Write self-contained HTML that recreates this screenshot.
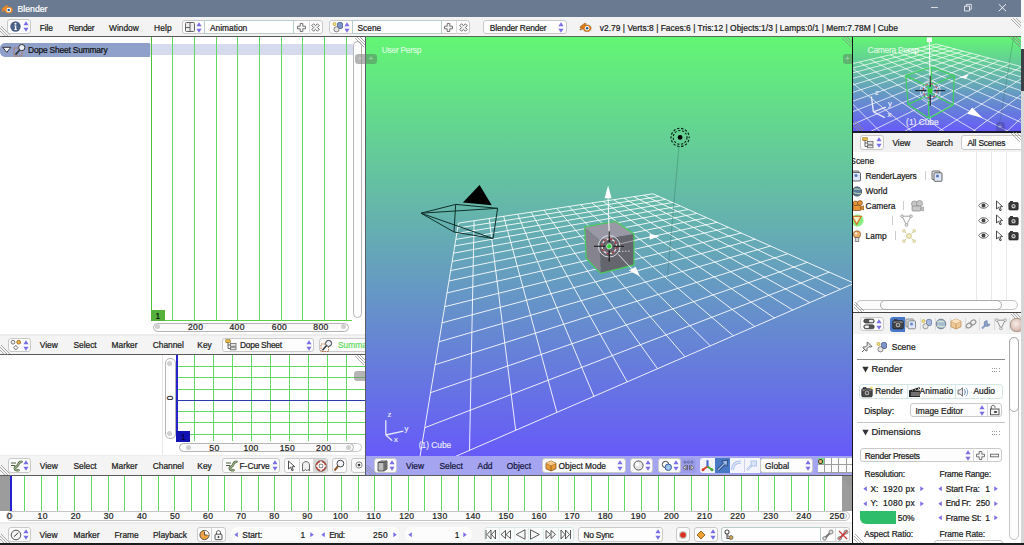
<!DOCTYPE html>
<html><head><meta charset="utf-8"><title>Blender</title>
<style>
html,body{margin:0;padding:0;background:#fff;}
#r{position:relative;width:1024px;height:545px;overflow:hidden;font-family:"Liberation Sans",sans-serif;}
#r div,#r svg{position:absolute;}
#r svg{overflow:hidden;}
.t{white-space:nowrap;-webkit-text-stroke:0.22px currentColor;}
.b{background:#fdfdfd;border:1px solid #c9c9c9;border-radius:3px;box-sizing:border-box;}
</style></head><body><div id="r">
<div style="left:0px;top:0px;width:1021px;height:17px;background:#697a91;"></div>
<div style="left:0px;top:17px;width:1024px;height:19px;background:#f3f3f3;"></div>
<div style="left:0px;top:36px;width:1024px;height:1.4px;background:#585858;"></div>
<div style="left:0px;top:37px;width:365px;height:298px;background:#fff;"></div>
<div style="left:0px;top:334.5px;width:365px;height:19.5px;background:#f4f4f4;"></div>
<div style="left:0px;top:334.3px;width:365px;height:1.3px;background:#ececec;"></div>
<div style="left:0px;top:354px;width:365px;height:1px;background:#5a5a5a;"></div>
<div style="left:0px;top:355px;width:365px;height:100px;background:#fff;"></div>
<div style="left:0px;top:455px;width:365px;height:20px;background:#f4f4f4;"></div>
<div style="left:0px;top:454.6px;width:365px;height:1.3px;background:#ececec;"></div>
<div style="left:0px;top:475px;width:853px;height:1px;background:#5a5a5a;"></div>
<div style="left:0px;top:476px;width:853px;height:47px;background:#fff;"></div>
<div style="left:0px;top:522.8px;width:853px;height:20.2px;background:#f4f4f4;"></div>
<div style="left:0px;top:522.3px;width:853px;height:1.3px;background:#ececec;"></div>
<div style="left:0px;top:543px;width:1024px;height:2px;background:#4a4a4a;"></div>
<div style="left:365px;top:37px;width:1px;height:438px;background:#5c5c66;"></div>
<div style="left:366px;top:37px;width:486px;height:420px;background:linear-gradient(#63f674,#675af9)"></div>
<div style="left:366px;top:456px;width:486px;height:19px;background:#a4a4f0;"></div>
<div style="left:851.5px;top:37px;width:1.3px;height:508px;background:#151515;"></div>
<div style="left:853px;top:37px;width:168px;height:94.5px;background:linear-gradient(#63f674,#675af9)"></div>
<div style="left:853px;top:131.3px;width:168px;height:1.4px;background:#1a1a30;"></div>
<div style="left:853px;top:132.7px;width:168px;height:19px;background:#f2f2f2;"></div>
<div style="left:853px;top:151.5px;width:168px;height:160.5px;background:#fff;"></div>
<div style="left:853px;top:312px;width:168px;height:1px;background:#444;"></div>
<div style="left:853px;top:313px;width:168px;height:21px;background:#f2f2f2;"></div>
<div style="left:853px;top:334px;width:168px;height:209px;background:#fff;"></div>
<svg style="left:366px;top:37px;" width="486" height="419" viewBox="0 0 486 419"><path d="M92.5 186.1L51.3 436.0M92.5 186.1L287.0 156.8M108.1 183.7L103.5 413.4M91.7 191.0L293.1 159.5M123.2 181.5L149.7 393.3M90.8 196.4L299.6 162.4M137.7 179.3L190.9 375.4M89.8 202.4L306.6 165.5M151.7 177.2L227.9 359.4M88.7 208.9L314.1 168.9M165.1 175.2L261.2 344.9M87.5 216.2L322.3 172.5M178.2 173.2L291.5 331.7M86.2 224.4L331.1 176.4M190.7 171.3L319.0 319.8M84.7 233.6L340.7 180.7M202.9 169.5L344.3 308.8M83.0 244.0L351.1 185.3M214.6 167.7L367.4 298.8M81.0 255.9L362.6 190.4M226.0 166.0L388.7 289.5M78.7 269.7L375.2 196.0M236.9 164.3L408.5 281.0M76.1 285.8L389.1 202.2M247.6 162.7L426.8 273.0M72.9 304.8L404.5 209.0M257.9 161.2L443.8 265.6M69.2 327.7L421.8 216.7M267.9 159.7L459.6 258.8M64.5 355.7L441.2 225.4M277.6 158.2L474.4 252.3M58.8 390.7L463.2 235.1M287.0 156.8L488.3 246.3M51.3 436.0L488.3 246.3" stroke="#fff" stroke-width="0.95" fill="none" opacity="0.92"/></svg>
<svg style="left:1.2px;top:2.8px;" width="14" height="13" viewBox="0 0 14 13"><g transform="scale(0.9)"><path d="M1 6.2 L6.5 2.2 L8 3.2 L5.8 5 L8.5 4.2 C11.5 4.2 13 6 13 7.8 C13 10 11 11.5 8.5 11.5 C6 11.5 4.2 10 4.3 8 L1.5 10 L0.8 9 L3.5 7 L1 7.2 Z" fill="#f08a1e"/><circle cx="8.6" cy="7.8" r="2.6" fill="#fff"/><circle cx="8.6" cy="7.8" r="1.5" fill="#2b5d94"/></g></svg>
<div class="t" style="left:17.5px;top:2.60px;line-height:12px;font-size:8.7px;color:#fff;">Blender</div>
<div style="left:930.7px;top:7px;width:7.3px;height:1px;background:rgba(255,255,255,0.75);"></div>
<svg style="left:963px;top:2.8px;" width="10" height="10" viewBox="0 0 10 10"><path d="M1.5 3.2 H6.5 V8 H1.5 Z M3.3 3.2 V1.4 H8.3 V6.2 H6.5" stroke="#fff" stroke-width="0.9" fill="none" opacity="0.88"/></svg>
<svg style="left:997px;top:2.8px;" width="10" height="10" viewBox="0 0 10 10"><path d="M1.8 1.2 L9 8.2 M9 1.2 L1.8 8.2" stroke="#fff" stroke-width="1" fill="none" opacity="0.9"/></svg>
<svg style="left:0px;top:26px;" width="10" height="10" viewBox="0 0 10 10"><path d="M0 2 L8 10 M0 5 L5 10 M0 -1 L11 10" stroke="#8a8a8a" stroke-width="0.7" fill="none"/></svg>
<div class="b" style="left:7.2px;top:19.1px;width:23.6px;height:14.7px;"></div>
<svg style="left:10px;top:21px;" width="11" height="11" viewBox="0 0 11 11"><circle cx="5.5" cy="5.5" r="5.2" fill="#4b6087"/><circle cx="5.5" cy="2.8" r="1" fill="#fff"/><path d="M4.2 4.6 H6.3 V8.3 H7 V9 H4.2 V8.3 H4.9 V5.3 H4.2 Z" fill="#fff"/></svg>
<svg style="left:23px;top:21.1px" width="6" height="11" viewBox="0 0 6 11"><path d="M3 0.3 L5.6 4.3 L0.4 4.3 Z M3 10.7 L5.6 6.7 L0.4 6.7 Z" fill="#7a6fe8"/></svg>
<div class="t" style="left:39.7px;top:22.10px;line-height:12px;font-size:8.4px;color:#1a1a1a;letter-spacing:-0.075px;--k:1;">File</div>
<div class="t" style="left:68.4px;top:22.10px;line-height:12px;font-size:8.4px;color:#1a1a1a;letter-spacing:-0.261px;--k:1;">Render</div>
<div class="t" style="left:109px;top:22.10px;line-height:12px;font-size:8.4px;color:#1a1a1a;letter-spacing:-0.016px;--k:1;">Window</div>
<div class="t" style="left:154px;top:22.10px;line-height:12px;font-size:8.4px;color:#1a1a1a;letter-spacing:0.116px;--k:1;">Help</div>
<div class="b" style="left:181.5px;top:19.5px;width:141px;height:14.5px;"></div>
<div style="left:204.0px;top:19.5px;width:88px;height:12.5px;border:1px solid #b9cccc;background:#fefefe"></div>
<div class="t" style="left:210.0px;top:22.10px;line-height:12px;font-size:8.4px;color:#1a1a1a;">Animation</div>
<svg style="left:295.5px;top:21.5px;" width="11" height="11" viewBox="0 0 11 11"><path d="M4.2 1.5 H6.8 V4.2 H9.5 V6.8 H6.8 V9.5 H4.2 V6.8 H1.5 V4.2 H4.2 Z" stroke="#666" stroke-width="0.9" fill="#f4f4f4"/></svg>
<div style="left:308.5px;top:20.5px;width:1px;height:13px;background:#ddd;"></div>
<svg style="left:310.0px;top:21.5px;" width="11" height="11" viewBox="0 0 11 11"><path d="M4.2 1.5 H6.8 V4.2 H9.5 V6.8 H6.8 V9.5 H4.2 V6.8 H1.5 V4.2 H4.2 Z" stroke="#666" stroke-width="0.9" fill="#f4f4f4" transform="rotate(45 5.5 5.5)"/></svg>
<svg style="left:196.0px;top:21.5px" width="6" height="11" viewBox="0 0 6 11"><path d="M3 0.3 L5.6 4.3 L0.4 4.3 Z M3 10.7 L5.6 6.7 L0.4 6.7 Z" fill="#7a6fe8"/></svg>
<svg style="left:185px;top:22px" width="10" height="10" viewBox="0 0 10 10"><rect x="0.5" y="0.5" width="9" height="9" rx="1" fill="#eee" stroke="#555" stroke-width="0.9"/><path d="M5 0.5 V9.5 M0.5 5.5 H5" stroke="#555" stroke-width="0.9"/></svg>
<div class="b" style="left:329px;top:19.5px;width:141px;height:14.5px;"></div>
<div style="left:351.5px;top:19.5px;width:88px;height:12.5px;border:1px solid #b9cccc;background:#fefefe"></div>
<div class="t" style="left:357.5px;top:22.10px;line-height:12px;font-size:8.4px;color:#1a1a1a;">Scene</div>
<svg style="left:443px;top:21.5px;" width="11" height="11" viewBox="0 0 11 11"><path d="M4.2 1.5 H6.8 V4.2 H9.5 V6.8 H6.8 V9.5 H4.2 V6.8 H1.5 V4.2 H4.2 Z" stroke="#666" stroke-width="0.9" fill="#f4f4f4"/></svg>
<div style="left:456px;top:20.5px;width:1px;height:13px;background:#ddd;"></div>
<svg style="left:457.5px;top:21.5px;" width="11" height="11" viewBox="0 0 11 11"><path d="M4.2 1.5 H6.8 V4.2 H9.5 V6.8 H6.8 V9.5 H4.2 V6.8 H1.5 V4.2 H4.2 Z" stroke="#666" stroke-width="0.9" fill="#f4f4f4" transform="rotate(45 5.5 5.5)"/></svg>
<svg style="left:343.5px;top:21.5px" width="6" height="11" viewBox="0 0 6 11"><path d="M3 0.3 L5.6 4.3 L0.4 4.3 Z M3 10.7 L5.6 6.7 L0.4 6.7 Z" fill="#7a6fe8"/></svg>
<svg style="left:332px;top:21px" width="12" height="12" viewBox="0 0 12 12"><circle cx="2.5" cy="3" r="1.6" fill="#f4e27a" stroke="#a89020" stroke-width="0.6"/><rect x="5.5" y="1.5" width="5" height="6" rx="1.5" fill="#7d95c9" stroke="#3c4f80" stroke-width="0.7"/><circle cx="4.5" cy="8.3" r="2.6" fill="#e8e8e8" stroke="#555" stroke-width="0.7"/></svg>
<div class="b" style="left:483px;top:19.5px;width:84px;height:14.5px;"></div>
<div class="t" style="left:489.8px;top:22.10px;line-height:12px;font-size:8.4px;color:#1a1a1a;letter-spacing:-0.148px;--k:1;">Blender Render</div>
<svg style="left:558px;top:21.5px" width="6" height="11" viewBox="0 0 6 11"><path d="M3 0.3 L5.6 4.3 L0.4 4.3 Z M3 10.7 L5.6 6.7 L0.4 6.7 Z" fill="#7a6fe8"/></svg>
<svg style="left:579px;top:21px;" width="13" height="12" viewBox="0 0 13 12"><path d="M1 5.7 L6 2 L7.4 3 L5.4 4.6 L8 3.9 C10.8 3.9 12.2 5.5 12.2 7.2 C12.2 9.2 10.3 10.6 8 10.6 C5.7 10.6 4 9.2 4.1 7.4 L1.5 9.2 L0.8 8.3 L3.3 6.4 L1 6.6 Z" fill="#e8801a" stroke="#6b3b08" stroke-width="0.4"/><circle cx="8.1" cy="7.2" r="2.3" fill="#fff"/><circle cx="8.1" cy="7.2" r="1.3" fill="#2b5d94"/></svg>
<div class="t" style="left:599.8px;top:22.10px;line-height:12px;font-size:8.4px;color:#1a1a1a;letter-spacing:0.039px;--k:1;">v2.79 | Verts:8 | Faces:6 | Tris:12 | Objects:1/3 | Lamps:0/1 | Mem:7.78M | Cube</div>
<svg style="left:1011px;top:37px;" width="10" height="10" viewBox="0 0 10 10"><path d="M2 0 L10 8 M5 0 L10 5 M-1 0 L10 11" stroke="#8a8a8a" stroke-width="0.7" fill="none"/></svg>
<div style="left:0;top:43px;width:150px;height:14px;background:#8fa1ca;border-radius:5px 0 0 5px"></div>
<div style="left:150px;top:44px;width:203px;height:10.5px;background:#d5dbec;"></div>
<svg style="left:2px;top:46px;" width="10" height="8" viewBox="0 0 10 8"><path d="M0.7 1.3 H8.9 L4.8 6.4 Z" fill="#f0f3fa" stroke="#222" stroke-width="0.9"/></svg>
<svg style="left:13px;top:43px;" width="14" height="14" viewBox="0 0 14 14"><rect x="1" y="5" width="8" height="8" fill="none" stroke="#b46a3a" stroke-width="1" stroke-dasharray="1.5 1"/><circle cx="8.8" cy="4.6" r="3.1" fill="#e9eef8" stroke="#333" stroke-width="1"/><path d="M6.6 7 L2.5 11.6" stroke="#333" stroke-width="1.6"/></svg>
<div class="t" style="left:28px;top:43.80px;line-height:12px;font-size:8.4px;color:#111;letter-spacing:-0.161px;--k:1;">Dope Sheet Summary</div>
<div style="left:150.7px;top:37px;width:1px;height:283.5px;background:#4fc23c;"></div>
<div style="left:172.4px;top:37px;width:1px;height:283.5px;background:#62d962;"></div>
<div style="left:194.0px;top:37px;width:1px;height:283.5px;background:#62d962;"></div>
<div style="left:215.7px;top:37px;width:1px;height:283.5px;background:#62d962;"></div>
<div style="left:237.4px;top:37px;width:1px;height:283.5px;background:#62d962;"></div>
<div style="left:259.1px;top:37px;width:1px;height:283.5px;background:#62d962;"></div>
<div style="left:280.7px;top:37px;width:1px;height:283.5px;background:#62d962;"></div>
<div style="left:302.4px;top:37px;width:1px;height:283.5px;background:#62d962;"></div>
<div style="left:324.1px;top:37px;width:1px;height:283.5px;background:#62d962;"></div>
<div style="left:345.7px;top:37px;width:1px;height:283.5px;background:#62d962;"></div>
<div style="left:151px;top:320px;width:201px;height:1px;background:#5fce4a;"></div>
<div style="left:151px;top:310px;width:13.5px;height:10.5px;background:#55b13c;"></div>
<div class="t" style="left:155.5px;top:309.70px;line-height:12px;font-size:8.4px;color:#111;">1</div>
<div style="left:152.5px;top:322.5px;width:194.5px;height:7px;border:1px solid #b5b5b5;border-radius:5px;background:#fafafa"></div>
<div style="left:154.5px;top:324.3px;width:5px;height:5px;border-radius:3px;background:#cfcfcf"></div>
<div style="left:340.5px;top:324.3px;width:5px;height:5px;border-radius:3px;background:#cfcfcf"></div>
<div class="t" style="left:188.0px;top:321.20px;line-height:12px;font-size:8.6px;color:#222;letter-spacing:0.3px;">200</div>
<div class="t" style="left:229.5px;top:321.20px;line-height:12px;font-size:8.6px;color:#222;letter-spacing:0.3px;">400</div>
<div class="t" style="left:271.8px;top:321.20px;line-height:12px;font-size:8.6px;color:#222;letter-spacing:0.3px;">600</div>
<div class="t" style="left:313.3px;top:321.20px;line-height:12px;font-size:8.6px;color:#222;letter-spacing:0.3px;">800</div>
<div style="left:353px;top:41px;width:7px;height:275px;border:1px solid #b5b5b5;border-radius:5px;background:#fdfdfd"></div>
<div style="left:355px;top:54px;width:10.5px;height:10px;background:rgba(120,120,120,0.55);border-radius:3px 0 0 3px"></div>
<div style="left:366px;top:54px;width:10.5px;height:10px;background:rgba(90,140,100,0.6);border-radius:0 3px 3px 0"></div>
<div class="t" style="left:368.5px;top:52.80px;line-height:12px;font-size:8px;color:rgba(255,255,255,0.35);">+</div>
<div class="t" style="left:357.5px;top:52.80px;line-height:12px;font-size:8px;color:rgba(255,255,255,0.25);">+</div>
<svg style="left:355px;top:37px;" width="10" height="10" viewBox="0 0 10 10"><path d="M2 0 L10 8 M5 0 L10 5 M-1 0 L10 11" stroke="#8a8a8a" stroke-width="0.7" fill="none"/></svg>
<svg style="left:0px;top:345px;" width="10" height="10" viewBox="0 0 10 10"><path d="M0 2 L8 10 M0 5 L5 10 M0 -1 L11 10" stroke="#8a8a8a" stroke-width="0.7" fill="none"/></svg>
<div class="b" style="left:7.5px;top:337.5px;width:23px;height:14.5px;"></div>
<svg style="left:10px;top:339px" width="12" height="12" viewBox="0 0 12 12"><circle cx="3" cy="3.2" r="1.9" fill="#f3f3f3" stroke="#555" stroke-width="0.8"/><circle cx="8.7" cy="3.2" r="1.9" fill="#f1b54a" stroke="#8a5a10" stroke-width="0.8"/><path d="M5.8 6.4 L8 8.7 L5.8 11 L3.6 8.7 Z" fill="#f3f3f3" stroke="#555" stroke-width="0.8"/></svg>
<svg style="left:22.5px;top:339.5px" width="6" height="11" viewBox="0 0 6 11"><path d="M3 0.3 L5.6 4.3 L0.4 4.3 Z M3 10.7 L5.6 6.7 L0.4 6.7 Z" fill="#7a6fe8"/></svg>
<div class="t" style="left:39.8px;top:339.00px;line-height:12px;font-size:8.4px;color:#1a1a1a;">View</div>
<div class="t" style="left:73.4px;top:339.00px;line-height:12px;font-size:8.4px;color:#1a1a1a;">Select</div>
<div class="t" style="left:111.5px;top:339.00px;line-height:12px;font-size:8.4px;color:#1a1a1a;">Marker</div>
<div class="t" style="left:152.7px;top:339.00px;line-height:12px;font-size:8.4px;color:#1a1a1a;">Channel</div>
<div class="t" style="left:197.3px;top:339.00px;line-height:12px;font-size:8.4px;color:#1a1a1a;">Key</div>
<div class="b" style="left:221.5px;top:337.5px;width:92px;height:14.5px;"></div>
<svg style="left:225px;top:339px;" width="12" height="12" viewBox="0 0 12 12"><rect x="0.8" y="0.8" width="4.4" height="2.6" fill="#f1c64a" stroke="#8a6a10" stroke-width="0.7"/><path d="M3 3.4 V9.5 H5.5 M3 6 H5.5" stroke="#555" stroke-width="0.9" fill="none"/><rect x="5.5" y="4.6" width="5.5" height="2.6" fill="#e8e8e8" stroke="#555" stroke-width="0.7"/><rect x="5.5" y="8.2" width="5.5" height="2.6" fill="#e8e8e8" stroke="#555" stroke-width="0.7"/></svg>
<div class="t" style="left:240px;top:339.00px;line-height:12px;font-size:8.4px;color:#1a1a1a;letter-spacing:-0.245px;--k:1;">Dope Sheet</div>
<svg style="left:306px;top:339.5px" width="6" height="11" viewBox="0 0 6 11"><path d="M3 0.3 L5.6 4.3 L0.4 4.3 Z M3 10.7 L5.6 6.7 L0.4 6.7 Z" fill="#7a6fe8"/></svg>
<div style="left:0px;top:335px;width:365px;height:20px;overflow:hidden"><div style="left:0px;top:-335px;width:1024px;height:545px">
<div class="b" style="left:318.5px;top:337.5px;width:60px;height:14.5px;"></div>
<svg style="left:320px;top:338.5px;" width="13" height="13" viewBox="0 0 13 13"><rect x="1" y="5" width="7.5" height="7.5" fill="none" stroke="#b46a3a" stroke-width="1" stroke-dasharray="1.5 1"/><circle cx="8.6" cy="4.4" r="3" fill="#eef2fa" stroke="#333" stroke-width="1"/><path d="M6.4 6.8 L2.5 11.2" stroke="#333" stroke-width="1.5"/></svg>
<div class="t" style="left:338px;top:339.00px;line-height:12px;font-size:8.4px;color:#5fdc5f;">Summary</div>
</div></div>
<div style="left:161.5px;top:355px;width:1px;height:100px;background:#e6e6e6;"></div>
<div style="left:194.4px;top:355px;width:1px;height:86px;background:#62d962;"></div>
<div style="left:213.4px;top:355px;width:1px;height:86px;background:#62d962;"></div>
<div style="left:232.4px;top:355px;width:1px;height:86px;background:#62d962;"></div>
<div style="left:251.4px;top:355px;width:1px;height:86px;background:#62d962;"></div>
<div style="left:270.4px;top:355px;width:1px;height:86px;background:#62d962;"></div>
<div style="left:289.4px;top:355px;width:1px;height:86px;background:#62d962;"></div>
<div style="left:308.4px;top:355px;width:1px;height:86px;background:#62d962;"></div>
<div style="left:327.4px;top:355px;width:1px;height:86px;background:#62d962;"></div>
<div style="left:346.4px;top:355px;width:1px;height:86px;background:#62d962;"></div>
<div style="left:177px;top:366.2px;width:188px;height:1px;background:#62d962;"></div>
<div style="left:177px;top:377.4px;width:188px;height:1px;background:#62d962;"></div>
<div style="left:177px;top:388.9px;width:188px;height:1px;background:#62d962;"></div>
<div style="left:177px;top:411.0px;width:188px;height:1px;background:#62d962;"></div>
<div style="left:177px;top:422.3px;width:188px;height:1px;background:#62d962;"></div>
<div style="left:177px;top:434.2px;width:188px;height:1px;background:#62d962;"></div>
<div style="left:175.5px;top:355px;width:2px;height:87px;background:#2424c8;"></div>
<div style="left:177px;top:400px;width:188px;height:1.3px;background:#2a3aae;"></div>
<div style="left:176px;top:431px;width:14px;height:11px;background:#1212b4;"></div>
<div class="t" style="left:181px;top:430.50px;line-height:12px;font-size:8.4px;color:#05053a;">1</div>
<div style="left:165px;top:358px;width:8.5px;height:79px;border:1px solid #b5b5b5;border-radius:5px;background:#fdfdfd"></div>
<div style="left:167.2px;top:360.5px;width:5px;height:5px;border-radius:3px;background:#cfcfcf"></div>
<div style="left:167.2px;top:430.5px;width:5px;height:5px;border-radius:3px;background:#cfcfcf"></div>
<div class="t" style="left:163.8px;top:392px;width:12px;height:12px;line-height:12px;font-size:8.4px;color:#222;text-align:center;transform:rotate(-90deg)">0</div>
<div style="left:179px;top:442.8px;width:181px;height:7.6px;border:1px solid #c8c8c8;border-radius:5px;background:#fdfdfd"></div>
<div style="left:179px;top:442.8px;width:173px;height:7.6px;border:1px solid #b5b5b5;border-radius:5px;background:#fafafa"></div>
<div style="left:185.5px;top:445px;width:5px;height:5px;border-radius:3px;background:#cfcfcf"></div>
<div style="left:345.5px;top:445px;width:5px;height:5px;border-radius:3px;background:#cfcfcf"></div>
<div class="t" style="left:199.4px;top:441.7px;width:30px;text-align:center;line-height:12px;font-size:8.6px;letter-spacing:0.3px;color:#222">50</div>
<div class="t" style="left:236px;top:441.7px;width:30px;text-align:center;line-height:12px;font-size:8.6px;letter-spacing:0.3px;color:#222">100</div>
<div class="t" style="left:272.4px;top:441.7px;width:30px;text-align:center;line-height:12px;font-size:8.6px;letter-spacing:0.3px;color:#222">150</div>
<div class="t" style="left:308.7px;top:441.7px;width:30px;text-align:center;line-height:12px;font-size:8.6px;letter-spacing:0.3px;color:#222">200</div>
<div style="left:354px;top:371.2px;width:11px;height:10px;background:rgba(120,120,120,0.55);border-radius:3px 0 0 3px"></div>
<svg style="left:355px;top:355px;" width="10" height="10" viewBox="0 0 10 10"><path d="M2 0 L10 8 M5 0 L10 5 M-1 0 L10 11" stroke="#8a8a8a" stroke-width="0.7" fill="none"/></svg>
<svg style="left:0px;top:465px;" width="10" height="10" viewBox="0 0 10 10"><path d="M0 2 L8 10 M0 5 L5 10 M0 -1 L11 10" stroke="#8a8a8a" stroke-width="0.7" fill="none"/></svg>
<div class="b" style="left:7.5px;top:458px;width:23px;height:14.5px;"></div>
<svg style="left:9.5px;top:459.5px" width="13" height="12" viewBox="0 0 13 12"><path d="M11.5 1.8 C7.5 1.8 9 6 6.5 6.5 C4 7 4 10.3 8.5 10.3" stroke="#5f7350" stroke-width="2.6" fill="none" stroke-linecap="round"/><path d="M11.5 1.8 C7.5 1.8 9 6 6.5 6.5 C4 7 4 10.3 8.5 10.3" stroke="#b8c8a0" stroke-width="0.9" fill="none" stroke-linecap="round"/><path d="M1 3 H6 M1 5.5 H5" stroke="#4a5a3a" stroke-width="1"/></svg>
<svg style="left:22.5px;top:460.0px" width="6" height="11" viewBox="0 0 6 11"><path d="M3 0.3 L5.6 4.3 L0.4 4.3 Z M3 10.7 L5.6 6.7 L0.4 6.7 Z" fill="#7a6fe8"/></svg>
<div class="t" style="left:39.8px;top:460.10px;line-height:12px;font-size:8.4px;color:#1a1a1a;">View</div>
<div class="t" style="left:73.4px;top:460.10px;line-height:12px;font-size:8.4px;color:#1a1a1a;">Select</div>
<div class="t" style="left:111.5px;top:460.10px;line-height:12px;font-size:8.4px;color:#1a1a1a;">Marker</div>
<div class="t" style="left:152.7px;top:460.10px;line-height:12px;font-size:8.4px;color:#1a1a1a;">Channel</div>
<div class="t" style="left:197.3px;top:460.10px;line-height:12px;font-size:8.4px;color:#1a1a1a;">Key</div>
<div class="b" style="left:221.5px;top:458px;width:58px;height:14.5px;"></div>
<svg style="left:224.5px;top:459.5px;" width="13" height="12" viewBox="0 0 13 12"><path d="M11.5 1.8 C7.5 1.8 9 6 6.5 6.5 C4 7 4 10.3 8.5 10.3" stroke="#5f7350" stroke-width="2.6" fill="none" stroke-linecap="round"/><path d="M11.5 1.8 C7.5 1.8 9 6 6.5 6.5 C4 7 4 10.3 8.5 10.3" stroke="#b8c8a0" stroke-width="0.9" fill="none" stroke-linecap="round"/><path d="M1 3 H6 M1 5.5 H5" stroke="#4a5a3a" stroke-width="1"/></svg>
<div class="t" style="left:239.5px;top:460.00px;line-height:12px;font-size:8.4px;color:#1a1a1a;">F-Curve</div>
<svg style="left:272px;top:459.8px" width="6" height="11" viewBox="0 0 6 11"><path d="M3 0.3 L5.6 4.3 L0.4 4.3 Z M3 10.7 L5.6 6.7 L0.4 6.7 Z" fill="#7a6fe8"/></svg>
<div class="b" style="left:284px;top:458px;width:43.5px;height:14.5px;"></div>
<div style="left:298.5px;top:459px;width:1px;height:13px;background:#d5d5d5;"></div>
<div style="left:313px;top:458.5px;width:14px;height:13.5px;background:#d8d8d8;border-radius:0 3px 3px 0"></div>
<svg style="left:287px;top:459.5px;" width="9" height="12" viewBox="0 0 9 12"><path d="M1.5 1 L1.5 9 L3.6 7.2 L5 10.8 L6.3 10.2 L4.9 6.8 L7.6 6.6 Z" fill="#fff" stroke="#222" stroke-width="0.8"/></svg>
<svg style="left:301px;top:459.5px;" width="10" height="12" viewBox="0 0 10 12"><path d="M1.5 10.8 V5 C1.5 0.5 8.5 0.5 8.5 5 V10.8 L7 9.5 L5.8 10.8 L4.4 9.5 L3 10.8 Z" fill="#f0f0f0" stroke="#444" stroke-width="0.8"/></svg>
<svg style="left:314.5px;top:459.5px;" width="12" height="12" viewBox="0 0 12 12"><circle cx="6" cy="6" r="4.6" fill="#fff" stroke="#c03a2a" stroke-width="1.6"/><circle cx="6" cy="6" r="2" fill="#fff" stroke="#555" stroke-width="0.8"/><path d="M6 0.8 V3.5 M6 8.5 V11.2 M0.8 6 H3.5 M8.5 6 H11.2" stroke="#fff" stroke-width="1.4"/><circle cx="6" cy="6" r="5.4" fill="none" stroke="#555" stroke-width="0.6"/></svg>
<div class="b" style="left:331.5px;top:458px;width:15px;height:14.5px;"></div>
<svg style="left:333px;top:459px;" width="12" height="13" viewBox="0 0 12 13"><circle cx="7.4" cy="4.6" r="3.4" fill="#f4f6fb" stroke="#444" stroke-width="1"/><path d="M5 7.2 L1.5 11.5" stroke="#8a5a2a" stroke-width="2"/></svg>
<div class="b" style="left:351px;top:458px;width:18px;height:14.5px"></div>
<svg style="left:354.4px;top:459.6px;" width="10" height="10" viewBox="0 0 10 10"><circle cx="5" cy="5" r="3.1" fill="none" stroke="#666" stroke-width="0.8"/><circle cx="5" cy="5" r="1.3" fill="#333"/></svg>
<div style="left:365px;top:455px;width:1px;height:20px;background:#5c5c66;"></div>
<div style="left:366px;top:456px;width:486px;height:19px;background:#a4a4f0"></div>
<div style="left:0px;top:476px;width:9.5px;height:35px;background:#9c9c9c;"></div>
<div style="left:841.5px;top:476px;width:11px;height:35px;background:#9c9c9c;"></div>
<div style="left:24.1px;top:476px;width:1px;height:35px;background:#62d962;"></div>
<div style="left:40.8px;top:476px;width:1px;height:35px;background:#62d962;"></div>
<div style="left:57.4px;top:476px;width:1px;height:35px;background:#62d962;"></div>
<div style="left:74.1px;top:476px;width:1px;height:35px;background:#62d962;"></div>
<div style="left:90.8px;top:476px;width:1px;height:35px;background:#62d962;"></div>
<div style="left:107.5px;top:476px;width:1px;height:35px;background:#62d962;"></div>
<div style="left:124.1px;top:476px;width:1px;height:35px;background:#62d962;"></div>
<div style="left:140.8px;top:476px;width:1px;height:35px;background:#62d962;"></div>
<div style="left:157.5px;top:476px;width:1px;height:35px;background:#62d962;"></div>
<div style="left:174.2px;top:476px;width:1px;height:35px;background:#62d962;"></div>
<div style="left:190.8px;top:476px;width:1px;height:35px;background:#62d962;"></div>
<div style="left:207.5px;top:476px;width:1px;height:35px;background:#62d962;"></div>
<div style="left:224.2px;top:476px;width:1px;height:35px;background:#62d962;"></div>
<div style="left:240.9px;top:476px;width:1px;height:35px;background:#62d962;"></div>
<div style="left:257.5px;top:476px;width:1px;height:35px;background:#62d962;"></div>
<div style="left:274.2px;top:476px;width:1px;height:35px;background:#62d962;"></div>
<div style="left:290.9px;top:476px;width:1px;height:35px;background:#62d962;"></div>
<div style="left:307.5px;top:476px;width:1px;height:35px;background:#62d962;"></div>
<div style="left:324.2px;top:476px;width:1px;height:35px;background:#62d962;"></div>
<div style="left:340.9px;top:476px;width:1px;height:35px;background:#62d962;"></div>
<div style="left:357.6px;top:476px;width:1px;height:35px;background:#62d962;"></div>
<div style="left:374.2px;top:476px;width:1px;height:35px;background:#62d962;"></div>
<div style="left:390.9px;top:476px;width:1px;height:35px;background:#62d962;"></div>
<div style="left:407.6px;top:476px;width:1px;height:35px;background:#62d962;"></div>
<div style="left:424.3px;top:476px;width:1px;height:35px;background:#62d962;"></div>
<div style="left:440.9px;top:476px;width:1px;height:35px;background:#62d962;"></div>
<div style="left:457.6px;top:476px;width:1px;height:35px;background:#62d962;"></div>
<div style="left:474.3px;top:476px;width:1px;height:35px;background:#62d962;"></div>
<div style="left:490.9px;top:476px;width:1px;height:35px;background:#62d962;"></div>
<div style="left:507.6px;top:476px;width:1px;height:35px;background:#62d962;"></div>
<div style="left:524.3px;top:476px;width:1px;height:35px;background:#62d962;"></div>
<div style="left:541.0px;top:476px;width:1px;height:35px;background:#62d962;"></div>
<div style="left:557.6px;top:476px;width:1px;height:35px;background:#62d962;"></div>
<div style="left:574.3px;top:476px;width:1px;height:35px;background:#62d962;"></div>
<div style="left:591.0px;top:476px;width:1px;height:35px;background:#62d962;"></div>
<div style="left:607.7px;top:476px;width:1px;height:35px;background:#62d962;"></div>
<div style="left:624.3px;top:476px;width:1px;height:35px;background:#62d962;"></div>
<div style="left:641.0px;top:476px;width:1px;height:35px;background:#62d962;"></div>
<div style="left:657.7px;top:476px;width:1px;height:35px;background:#62d962;"></div>
<div style="left:674.3px;top:476px;width:1px;height:35px;background:#62d962;"></div>
<div style="left:691.0px;top:476px;width:1px;height:35px;background:#62d962;"></div>
<div style="left:707.7px;top:476px;width:1px;height:35px;background:#62d962;"></div>
<div style="left:724.4px;top:476px;width:1px;height:35px;background:#62d962;"></div>
<div style="left:741.0px;top:476px;width:1px;height:35px;background:#62d962;"></div>
<div style="left:757.7px;top:476px;width:1px;height:35px;background:#62d962;"></div>
<div style="left:774.4px;top:476px;width:1px;height:35px;background:#62d962;"></div>
<div style="left:791.1px;top:476px;width:1px;height:35px;background:#62d962;"></div>
<div style="left:807.7px;top:476px;width:1px;height:35px;background:#62d962;"></div>
<div style="left:824.4px;top:476px;width:1px;height:35px;background:#62d962;"></div>
<div style="left:10px;top:476px;width:2px;height:35px;background:#2222d0;"></div>
<div style="left:5.5px;top:511.2px;width:842px;height:7.6px;border:1px solid #c4c4c4;border-radius:5px;background:#fbfbfb"></div>
<div style="left:6.5px;top:512.6px;width:6.5px;height:6.5px;border-radius:4px;border:0.6px solid #bbb;box-sizing:border-box"></div>
<div style="left:840px;top:512.6px;width:6.5px;height:6.5px;border-radius:4px;border:0.6px solid #bbb;box-sizing:border-box"></div>
<div class="t" style="left:-5.4px;top:510.3px;width:30px;text-align:center;line-height:12px;font-size:8.6px;letter-spacing:0.3px;color:#222">0</div>
<div class="t" style="left:27.7px;top:510.3px;width:30px;text-align:center;line-height:12px;font-size:8.6px;letter-spacing:0.3px;color:#222">10</div>
<div class="t" style="left:60.8px;top:510.3px;width:30px;text-align:center;line-height:12px;font-size:8.6px;letter-spacing:0.3px;color:#222">20</div>
<div class="t" style="left:93.8px;top:510.3px;width:30px;text-align:center;line-height:12px;font-size:8.6px;letter-spacing:0.3px;color:#222">30</div>
<div class="t" style="left:127.0px;top:510.3px;width:30px;text-align:center;line-height:12px;font-size:8.6px;letter-spacing:0.3px;color:#222">40</div>
<div class="t" style="left:160.1px;top:510.3px;width:30px;text-align:center;line-height:12px;font-size:8.6px;letter-spacing:0.3px;color:#222">50</div>
<div class="t" style="left:193.2px;top:510.3px;width:30px;text-align:center;line-height:12px;font-size:8.6px;letter-spacing:0.3px;color:#222">60</div>
<div class="t" style="left:226.3px;top:510.3px;width:30px;text-align:center;line-height:12px;font-size:8.6px;letter-spacing:0.3px;color:#222">70</div>
<div class="t" style="left:259.4px;top:510.3px;width:30px;text-align:center;line-height:12px;font-size:8.6px;letter-spacing:0.3px;color:#222">80</div>
<div class="t" style="left:292.4px;top:510.3px;width:30px;text-align:center;line-height:12px;font-size:8.6px;letter-spacing:0.3px;color:#222">90</div>
<div class="t" style="left:325.6px;top:510.3px;width:30px;text-align:center;line-height:12px;font-size:8.6px;letter-spacing:0.3px;color:#222">100</div>
<div class="t" style="left:358.7px;top:510.3px;width:30px;text-align:center;line-height:12px;font-size:8.6px;letter-spacing:0.3px;color:#222">110</div>
<div class="t" style="left:391.8px;top:510.3px;width:30px;text-align:center;line-height:12px;font-size:8.6px;letter-spacing:0.3px;color:#222">120</div>
<div class="t" style="left:424.9px;top:510.3px;width:30px;text-align:center;line-height:12px;font-size:8.6px;letter-spacing:0.3px;color:#222">130</div>
<div class="t" style="left:458.0px;top:510.3px;width:30px;text-align:center;line-height:12px;font-size:8.6px;letter-spacing:0.3px;color:#222">140</div>
<div class="t" style="left:491.1px;top:510.3px;width:30px;text-align:center;line-height:12px;font-size:8.6px;letter-spacing:0.3px;color:#222">150</div>
<div class="t" style="left:524.1px;top:510.3px;width:30px;text-align:center;line-height:12px;font-size:8.6px;letter-spacing:0.3px;color:#222">160</div>
<div class="t" style="left:557.2px;top:510.3px;width:30px;text-align:center;line-height:12px;font-size:8.6px;letter-spacing:0.3px;color:#222">170</div>
<div class="t" style="left:590.3px;top:510.3px;width:30px;text-align:center;line-height:12px;font-size:8.6px;letter-spacing:0.3px;color:#222">180</div>
<div class="t" style="left:623.4px;top:510.3px;width:30px;text-align:center;line-height:12px;font-size:8.6px;letter-spacing:0.3px;color:#222">190</div>
<div class="t" style="left:656.5px;top:510.3px;width:30px;text-align:center;line-height:12px;font-size:8.6px;letter-spacing:0.3px;color:#222">200</div>
<div class="t" style="left:689.6px;top:510.3px;width:30px;text-align:center;line-height:12px;font-size:8.6px;letter-spacing:0.3px;color:#222">210</div>
<div class="t" style="left:722.8px;top:510.3px;width:30px;text-align:center;line-height:12px;font-size:8.6px;letter-spacing:0.3px;color:#222">220</div>
<div class="t" style="left:755.9px;top:510.3px;width:30px;text-align:center;line-height:12px;font-size:8.6px;letter-spacing:0.3px;color:#222">230</div>
<div class="t" style="left:788.9px;top:510.3px;width:30px;text-align:center;line-height:12px;font-size:8.6px;letter-spacing:0.3px;color:#222">240</div>
<div class="t" style="left:822.0px;top:510.3px;width:30px;text-align:center;line-height:12px;font-size:8.6px;letter-spacing:0.3px;color:#222">250</div>
<svg style="left:842px;top:476px;" width="10" height="10" viewBox="0 0 10 10"><path d="M2 0 L10 8 M5 0 L10 5 M-1 0 L10 11" stroke="#8a8a8a" stroke-width="0.7" fill="none"/></svg>
<svg style="left:0px;top:534px;" width="10" height="10" viewBox="0 0 10 10"><path d="M0 2 L8 10 M0 5 L5 10 M0 -1 L11 10" stroke="#8a8a8a" stroke-width="0.7" fill="none"/></svg>
<div class="b" style="left:7.5px;top:527px;width:23px;height:14.5px;"></div>
<svg style="left:9.5px;top:528.5px" width="12" height="12" viewBox="0 0 12 12"><circle cx="6" cy="6" r="4.8" fill="#f4f4f4" stroke="#555" stroke-width="1"/><path d="M6 6 L8.2 3.6 M6 6 L4 7.5" stroke="#333" stroke-width="0.9"/></svg>
<svg style="left:22.5px;top:529.0px" width="6" height="11" viewBox="0 0 6 11"><path d="M3 0.3 L5.6 4.3 L0.4 4.3 Z M3 10.7 L5.6 6.7 L0.4 6.7 Z" fill="#7a6fe8"/></svg>
<div class="t" style="left:39.5px;top:528.50px;line-height:12px;font-size:8.4px;color:#1a1a1a;">View</div>
<div class="t" style="left:73.5px;top:528.50px;line-height:12px;font-size:8.4px;color:#1a1a1a;">Marker</div>
<div class="t" style="left:114.5px;top:528.50px;line-height:12px;font-size:8.4px;color:#1a1a1a;">Frame</div>
<div class="t" style="left:153px;top:528.50px;line-height:12px;font-size:8.4px;color:#1a1a1a;">Playback</div>
<div class="b" style="left:196.5px;top:527px;width:29px;height:14.5px;"></div>
<div style="left:210.5px;top:528px;width:1px;height:13px;background:#d5d5d5;"></div>
<svg style="left:198.5px;top:528.5px;" width="11" height="12" viewBox="0 0 11 12"><circle cx="5.5" cy="6" r="4.6" fill="#f2a444" stroke="#444" stroke-width="0.9"/><path d="M5.5 6 V1.8 A4.2 4.2 0 0 1 9.7 6 Z" fill="#fff"/><path d="M5.5 2.5 V6 H8.5" stroke="#333" stroke-width="0.8" fill="none"/></svg>
<svg style="left:212.5px;top:528.5px;" width="11" height="12" viewBox="0 0 11 12"><rect x="2" y="5.2" width="7" height="5.5" rx="0.8" fill="#f4f4f4" stroke="#444" stroke-width="0.9"/><path d="M3.5 5.2 V3.6 C3.5 1 7.5 1 7.5 3.6 V5.2" stroke="#444" stroke-width="0.9" fill="none"/><rect x="4.8" y="7" width="1.4" height="2" fill="#444"/></svg>
<div style="left:231px;top:527px;width:168px;height:14px;background:#fcfcfc;border-radius:6px"></div>
<svg style="left:233.5px;top:531.8px;" width="4" height="5.4" viewBox="0 0 4 5.4"><path d="M3.8 0.2 L3.8 5.2 L0.3 2.7 Z" fill="#7a6fe8"/></svg>
<div class="t" style="left:242.3px;top:528.50px;line-height:12px;font-size:8.4px;color:#1a1a1a;">Start:</div>
<div class="t" style="left:300.5px;top:528.50px;line-height:12px;font-size:8.4px;color:#1a1a1a;">1</div>
<svg style="left:309.6px;top:531.8px;" width="4" height="5.4" viewBox="0 0 4 5.4"><path d="M0.3 0.2 L0.3 5.2 L3.8 2.7 Z" fill="#7a6fe8"/></svg>
<svg style="left:320.6px;top:531.8px;" width="4" height="5.4" viewBox="0 0 4 5.4"><path d="M3.8 0.2 L3.8 5.2 L0.3 2.7 Z" fill="#7a6fe8"/></svg>
<div class="t" style="left:329.2px;top:528.50px;line-height:12px;font-size:8.4px;color:#1a1a1a;letter-spacing:-0.459px;--k:1;">End:</div>
<div class="t" style="left:373.1px;top:528.50px;line-height:12px;font-size:8.4px;color:#1a1a1a;letter-spacing:0.339px;--k:1;">250</div>
<svg style="left:392.7px;top:531.8px;" width="4" height="5.4" viewBox="0 0 4 5.4"><path d="M0.3 0.2 L0.3 5.2 L3.8 2.7 Z" fill="#7a6fe8"/></svg>
<div style="left:405px;top:527px;width:66.5px;height:14px;background:#fcfcfc;border-radius:6px"></div>
<svg style="left:408.3px;top:531.8px;" width="4" height="5.4" viewBox="0 0 4 5.4"><path d="M3.8 0.2 L3.8 5.2 L0.3 2.7 Z" fill="#7a6fe8"/></svg>
<div class="t" style="left:454.8px;top:528.50px;line-height:12px;font-size:8.4px;color:#1a1a1a;">1</div>
<svg style="left:463.2px;top:531.8px;" width="4" height="5.4" viewBox="0 0 4 5.4"><path d="M0.3 0.2 L0.3 5.2 L3.8 2.7 Z" fill="#7a6fe8"/></svg>
<div style="left:484px;top:527px;width:88px;height:12.5px;border:1px solid #d8e8e8;border-radius:3px;background:#fafbfb"></div>
<div style="left:498.8px;top:528px;width:1px;height:12.5px;background:#e2eeee;"></div>
<div style="left:513.6px;top:528px;width:1px;height:12.5px;background:#e2eeee;"></div>
<div style="left:528.4px;top:528px;width:1px;height:12.5px;background:#e2eeee;"></div>
<div style="left:543.2px;top:528px;width:1px;height:12.5px;background:#e2eeee;"></div>
<div style="left:558.0px;top:528px;width:1px;height:12.5px;background:#e2eeee;"></div>
<svg style="left:485px;top:529px;" width="11.5" height="11" viewBox="0 0 11.5 11"><path d="M1 1 V10" stroke="#333" stroke-width="0.8" fill="#f6f6f6"/><path d="M6 1 L2 5.5 L6 10 Z M10.5 1 L6.5 5.5 L10.5 10 Z" stroke="#333" stroke-width="0.8" fill="#f6f6f6"/></svg>
<svg style="left:500px;top:529px;" width="11.5" height="11" viewBox="0 0 11.5 11"><path d="M5.5 1.5 L1 5.5 L5.5 9.5 Z M10.5 1.5 L6 5.5 L10.5 9.5 Z" stroke="#333" stroke-width="0.8" fill="#f6f6f6"/></svg>
<svg style="left:515px;top:529px;" width="11.5" height="11" viewBox="0 0 11.5 11"><path d="M10 0.8 L1.2 5.5 L10 10.2 Z" stroke="#333" stroke-width="0.8" fill="#f6f6f6"/></svg>
<svg style="left:529px;top:529px;" width="11.5" height="11" viewBox="0 0 11.5 11"><path d="M1.5 0.8 L10.3 5.5 L1.5 10.2 Z" stroke="#333" stroke-width="0.8" fill="#f6f6f6"/></svg>
<svg style="left:545px;top:529px;" width="11.5" height="11" viewBox="0 0 11.5 11"><path d="M1 1.5 L5.5 5.5 L1 9.5 Z M6 1.5 L10.5 5.5 L6 9.5 Z" stroke="#333" stroke-width="0.8" fill="#f6f6f6"/></svg>
<svg style="left:560px;top:529px;" width="11.5" height="11" viewBox="0 0 11.5 11"><path d="M10.5 1 V10" stroke="#333" stroke-width="0.8" fill="#f6f6f6"/><path d="M1 1 L5 5.5 L1 10 Z M5.5 1 L9.5 5.5 L5.5 10 Z" stroke="#333" stroke-width="0.8" fill="#f6f6f6"/></svg>
<div class="b" style="left:577.5px;top:527px;width:85px;height:14.5px;"></div>
<div class="t" style="left:583.5px;top:528.50px;line-height:12px;font-size:8.4px;color:#1a1a1a;letter-spacing:-0.237px;--k:1;">No Sync</div>
<svg style="left:655px;top:529.0px" width="6" height="11" viewBox="0 0 6 11"><path d="M3 0.3 L5.6 4.3 L0.4 4.3 Z M3 10.7 L5.6 6.7 L0.4 6.7 Z" fill="#7a6fe8"/></svg>
<div class="b" style="left:675.5px;top:527px;width:14px;height:14.5px;"></div>
<svg style="left:677.5px;top:529.5px;" width="10" height="10" viewBox="0 0 10 10"><circle cx="5" cy="5" r="4" fill="#c8c8c8"/><circle cx="5" cy="5" r="2.8" fill="#d8301e"/></svg>
<div class="b" style="left:693.5px;top:527px;width:24px;height:14.5px;"></div>
<svg style="left:696px;top:529.5px;" width="10" height="10" viewBox="0 0 10 10"><path d="M5 1 L9 5 L5 9 L1 5 Z" fill="#f0a030" stroke="#7a5010" stroke-width="0.8"/></svg>
<svg style="left:709.5px;top:529.0px" width="6" height="11" viewBox="0 0 6 11"><path d="M3 0.3 L5.6 4.3 L0.4 4.3 Z M3 10.7 L5.6 6.7 L0.4 6.7 Z" fill="#7a6fe8"/></svg>
<div class="b" style="left:720.5px;top:527px;width:129px;height:14.5px;"></div>
<div style="left:720.5px;top:527px;width:98px;height:12.5px;border:1px solid #b9cccc;background:#fefefe;border-radius:3px 0 0 3px"></div>
<svg style="left:723px;top:528.5px;" width="12" height="12" viewBox="0 0 12 12"><circle cx="4" cy="3" r="2" fill="none" stroke="#555" stroke-width="1.1"/><path d="M4 5 V9.5 H7 M4 7 H6" stroke="#555" stroke-width="1.1" fill="none"/><circle cx="8" cy="8.5" r="2" fill="#c9a24a" stroke="#555" stroke-width="0.7"/></svg>
<div style="left:834.5px;top:528px;width:1px;height:13px;background:#ddd;"></div>
<svg style="left:821.5px;top:528.5px;" width="12" height="12" viewBox="0 0 12 12"><path d="M2 10 L8 4" stroke="#777" stroke-width="2.2"/><circle cx="9" cy="3" r="2" fill="#ddd" stroke="#777" stroke-width="0.9"/><circle cx="2.6" cy="9.4" r="1.8" fill="#ddd" stroke="#777" stroke-width="0.9"/></svg>
<svg style="left:836.5px;top:528.5px;" width="12" height="12" viewBox="0 0 12 12"><path d="M2 10 L8 4" stroke="#777" stroke-width="2.2"/><circle cx="9" cy="3" r="2" fill="#ddd" stroke="#777" stroke-width="0.9"/><circle cx="2.6" cy="9.4" r="1.8" fill="#ddd" stroke="#777" stroke-width="0.9"/><path d="M2 2 L10 10 M10 2 L2 10" stroke="#d03a3a" stroke-width="1.2"/></svg>
<svg style="left:366px;top:465px;" width="10" height="10" viewBox="0 0 10 10"><path d="M0 2 L8 10 M0 5 L5 10 M0 -1 L11 10" stroke="#8a8a8a" stroke-width="0.7" fill="none"/></svg>
<div class="b" style="left:374px;top:458px;width:23px;height:14.5px;"></div>
<svg style="left:377px;top:459.5px;" width="11" height="12" viewBox="0 0 11 12"><path d="M1 2.5 L4 1 L10 1 L10 9 L7 11 L1 11 Z" fill="#bdbdbd" stroke="#333" stroke-width="0.8"/><path d="M1 2.5 L7 2.5 L10 1 M7 2.5 V11" stroke="#333" stroke-width="0.8" fill="none"/><path d="M7 2.5 L10 1 L10 9 L7 11 Z" fill="#6c6c6c"/></svg>
<svg style="left:389px;top:460.0px" width="6" height="11" viewBox="0 0 6 11"><path d="M3 0.3 L5.6 4.3 L0.4 4.3 Z M3 10.7 L5.6 6.7 L0.4 6.7 Z" fill="#7a6fe8"/></svg>
<div class="t" style="left:406px;top:459.50px;line-height:12px;font-size:8.4px;color:#15153a;">View</div>
<div class="t" style="left:439.5px;top:459.50px;line-height:12px;font-size:8.4px;color:#15153a;">Select</div>
<div class="t" style="left:477.6px;top:459.50px;line-height:12px;font-size:8.4px;color:#15153a;">Add</div>
<div class="t" style="left:506.8px;top:459.50px;line-height:12px;font-size:8.4px;color:#15153a;">Object</div>
<div class="b" style="left:541.5px;top:458px;width:84px;height:14.5px;"></div>
<svg style="left:544.5px;top:459.5px;" width="12" height="12" viewBox="0 0 12 12"><path d="M6 1 L11 3.2 V8.8 L6 11 L1 8.8 V3.2 Z" fill="#e99a3c" stroke="#7a4a10" stroke-width="0.7"/><path d="M1 3.2 L6 5.4 L11 3.2 M6 5.4 V11" stroke="#7a4a10" stroke-width="0.7" fill="none"/><path d="M6 1 L11 3.2 L6 5.4 L1 3.2 Z" fill="#f6c986"/></svg>
<div class="t" style="left:558.5px;top:459.50px;line-height:12px;font-size:8.4px;color:#1a1a1a;">Object Mode</div>
<svg style="left:617px;top:460.0px" width="6" height="11" viewBox="0 0 6 11"><path d="M3 0.3 L5.6 4.3 L0.4 4.3 Z M3 10.7 L5.6 6.7 L0.4 6.7 Z" fill="#7a6fe8"/></svg>
<div class="b" style="left:630px;top:458px;width:23px;height:14.5px;"></div>
<svg style="left:633px;top:460px;" width="11" height="11" viewBox="0 0 11 11"><circle cx="5.5" cy="5.5" r="4.6" fill="#e6e6e6" stroke="#444" stroke-width="0.9"/><circle cx="4.3" cy="4.2" r="2" fill="#fff" opacity="0.9"/></svg>
<svg style="left:645px;top:460.0px" width="6" height="11" viewBox="0 0 6 11"><path d="M3 0.3 L5.6 4.3 L0.4 4.3 Z M3 10.7 L5.6 6.7 L0.4 6.7 Z" fill="#7a6fe8"/></svg>
<div class="b" style="left:658px;top:458px;width:22.5px;height:14.5px;"></div>
<div style="left:680.5px;top:458px;width:15px;height:14.5px;background:#9c9ceb;border-radius:0 3px 3px 0"></div>
<svg style="left:660.5px;top:459.5px;" width="12" height="12" viewBox="0 0 12 12"><circle cx="4.5" cy="4.5" r="3.2" fill="none" stroke="#333" stroke-width="0.9"/><circle cx="7.3" cy="7.3" r="3.2" fill="#9ec4ee" stroke="#2a4a8a" stroke-width="0.9"/></svg>
<svg style="left:672.5px;top:460.0px" width="6" height="11" viewBox="0 0 6 11"><path d="M3 0.3 L5.6 4.3 L0.4 4.3 Z M3 10.7 L5.6 6.7 L0.4 6.7 Z" fill="#7a6fe8"/></svg>
<svg style="left:681.5px;top:459.5px;" width="13" height="12" viewBox="0 0 13 12"><circle cx="3" cy="2.2" r="1.1" fill="none" stroke="#4a5a8a" stroke-width="0.7"/><circle cx="6.5" cy="2.2" r="1.1" fill="none" stroke="#4a5a8a" stroke-width="0.7"/><circle cx="10" cy="2.2" r="1.1" fill="none" stroke="#4a5a8a" stroke-width="0.7"/><path d="M1 7.5 L4 5 V10 Z M12 7.5 L9 5 V10 Z M5.5 5 V10 M7.5 5 V10" stroke="#555" stroke-width="0.8" fill="#ddd"/></svg>
<div style="left:700px;top:458px;width:59.5px;height:14.5px;background:#f4f4fd;border-radius:3px 0 0 3px"></div>
<div style="left:744px;top:459px;width:0.7px;height:12.5px;background:#d0d0ee;"></div>
<div style="left:715px;top:458px;width:14.5px;height:14.5px;background:#4878c4"></div>
<svg style="left:701px;top:459px;" width="13" height="13" viewBox="0 0 13 13"><path d="M6.5 7.5 V2" stroke="#4a6ad0" stroke-width="2.2" stroke-linecap="round"/><path d="M6.5 7.5 L2.2 10.6" stroke="#d8402a" stroke-width="1.8"/><path d="M6.5 7.5 L10.8 10.6" stroke="#48a838" stroke-width="1.8"/><circle cx="2" cy="10.8" r="1.5" fill="#d8402a"/><circle cx="11" cy="10.8" r="1.5" fill="#48a838"/></svg>
<svg style="left:716px;top:459px;" width="13" height="13" viewBox="0 0 13 13"><path d="M2 11 L8.5 4.5" stroke="#1a2a5a" stroke-width="2.6"/><path d="M11.8 1.2 L10.8 7.4 L5.6 2.2 Z" fill="#9cc0f0" stroke="#1a2a5a" stroke-width="0.7"/><path d="M2 11 L8.5 4.5" stroke="#9cc0f0" stroke-width="1.4"/></svg>
<svg style="left:730px;top:459px;" width="13" height="13" viewBox="0 0 13 13"><path d="M2.5 11 C2.5 5.5 5.5 3 11 3" stroke="#a8bce4" stroke-width="2.8" fill="none"/><path d="M2.5 11 C2.5 5.5 5.5 3 11 3" stroke="#d8e4f8" stroke-width="1.4" fill="none"/></svg>
<svg style="left:745px;top:459px;" width="13" height="13" viewBox="0 0 13 13"><path d="M2 11 L7.5 5.5" stroke="#a8bce4" stroke-width="2.4"/><path d="M2 11 L7.5 5.5" stroke="#d8e4f8" stroke-width="1.1"/><rect x="6" y="2" width="5.5" height="5" fill="#d8e4f8" stroke="#a8bce4" stroke-width="0.8"/></svg>
<div class="b" style="left:759.5px;top:458px;width:53px;height:14.5px;"></div>
<div class="t" style="left:765px;top:459.50px;line-height:12px;font-size:8.4px;color:#1a1a1a;">Global</div>
<svg style="left:805px;top:460.0px" width="6" height="11" viewBox="0 0 6 11"><path d="M3 0.3 L5.6 4.3 L0.4 4.3 Z M3 10.7 L5.6 6.7 L0.4 6.7 Z" fill="#7a6fe8"/></svg>
<div style="left:817.5px;top:457.5px;width:35px;height:15px;background:#9c9c9c;"></div>
<div style="left:818.15px;top:458px;width:5.60px;height:6.3px;background:#74dc8c"></div>
<div style="left:818.15px;top:464.9px;width:5.60px;height:7.0px;background:#fbfbfb"></div>
<div style="left:824.65px;top:458px;width:6.30px;height:6.3px;background:#fbfbfb"></div>
<div style="left:824.65px;top:464.9px;width:6.30px;height:7.0px;background:#fbfbfb"></div>
<div style="left:831.85px;top:458px;width:6.60px;height:6.3px;background:#fbfbfb"></div>
<div style="left:831.85px;top:464.9px;width:6.60px;height:7.0px;background:#fbfbfb"></div>
<div style="left:839.35px;top:458px;width:6.60px;height:6.3px;background:#fbfbfb"></div>
<div style="left:839.35px;top:464.9px;width:6.60px;height:7.0px;background:#fbfbfb"></div>
<div style="left:846.85px;top:458px;width:6.20px;height:6.3px;background:#fbfbfb"></div>
<div style="left:846.85px;top:464.9px;width:6.20px;height:7.0px;background:#fbfbfb"></div>
<div style="left:818.4px;top:459px;width:2.6px;height:2.6px;border-radius:2px;background:#e8b070;border:0.6px solid #443"></div>
<div style="left:851.5px;top:37px;width:1.3px;height:508px;background:#151515;"></div>
<svg style="left:854px;top:121px;" width="10" height="10" viewBox="0 0 10 10"><path d="M0 2 L8 10 M0 5 L5 10 M0 -1 L11 10" stroke="#8a8a8a" stroke-width="0.7" fill="none"/></svg>
<div class="b" style="left:859.5px;top:135px;width:24.5px;height:14.5px;"></div>
<svg style="left:862px;top:136.5px;" width="12" height="12" viewBox="0 0 12 12"><rect x="0.8" y="0.8" width="4.4" height="2.6" fill="#f1c64a" stroke="#8a6a10" stroke-width="0.7"/><path d="M3 3.4 V9.5 H5.5 M3 6 H5.5" stroke="#555" stroke-width="0.9" fill="none"/><rect x="5.5" y="4.6" width="5.5" height="2.6" fill="#e8e8e8" stroke="#555" stroke-width="0.7"/><rect x="5.5" y="8.2" width="5.5" height="2.6" fill="#e8e8e8" stroke="#555" stroke-width="0.7"/></svg>
<svg style="left:875.5px;top:137.0px" width="6" height="11" viewBox="0 0 6 11"><path d="M3 0.3 L5.6 4.3 L0.4 4.3 Z M3 10.7 L5.6 6.7 L0.4 6.7 Z" fill="#7a6fe8"/></svg>
<div class="t" style="left:892.4px;top:136.80px;line-height:12px;font-size:8.4px;color:#1a1a1a;">View</div>
<div class="t" style="left:926.4px;top:136.80px;line-height:12px;font-size:8.4px;color:#1a1a1a;">Search</div>
<div class="b" style="left:961px;top:135.3px;width:70px;height:14.5px"></div>
<div class="t" style="left:967.4px;top:136.80px;line-height:12px;font-size:8.4px;color:#1a1a1a;letter-spacing:-0.158px;--k:1;">All Scenes</div>
<svg style="left:1011px;top:132px;" width="10" height="10" viewBox="0 0 10 10"><path d="M2 0 L10 8 M5 0 L10 5 M-1 0 L10 11" stroke="#8a8a8a" stroke-width="0.7" fill="none"/></svg>
<div style="left:976.3px;top:152px;width:1px;height:148px;background:#e9e9e9;"></div>
<div style="left:991.0px;top:152px;width:1px;height:148px;background:#e9e9e9;"></div>
<div style="left:1006.1px;top:152px;width:1px;height:148px;background:#e9e9e9;"></div>
<div style="left:853px;top:152px;width:168px;height:148px;overflow:hidden"><div style="left:-853px;top:-152px;width:1024px;height:545px">
<div class="t" style="left:850.3px;top:155.20px;line-height:12px;font-size:8.4px;color:#1a1a1a;">Scene</div>
<div class="t" style="left:865.6px;top:170.10px;line-height:12px;font-size:8.4px;color:#1a1a1a;letter-spacing:-0.142px;--k:1;">RenderLayers</div>
<div class="t" style="left:865.6px;top:185.20px;line-height:12px;font-size:8.4px;color:#1a1a1a;">World</div>
<div class="t" style="left:865.6px;top:199.90px;line-height:12px;font-size:8.4px;color:#1a1a1a;">Camera</div>
<div class="t" style="left:865.6px;top:229.90px;line-height:12px;font-size:8.4px;color:#1a1a1a;">Lamp</div>
<svg style="left:853px;top:170px;" width="10" height="12" viewBox="0 0 10 12"><rect x="-2" y="1" width="8" height="8.5" rx="1" fill="#e8e8e8" stroke="#444" stroke-width="0.8"/><rect x="-0.5" y="2.5" width="8" height="8.5" rx="1" fill="#dfe6f6" stroke="#444" stroke-width="0.8"/><circle cx="3" cy="5.5" r="1.6" fill="#5a7ac0"/></svg>
<svg style="left:853px;top:185.5px;" width="10" height="11" viewBox="0 0 10 11"><circle cx="4" cy="5.5" r="4.6" fill="#5a7a9a" stroke="#2a3a4a" stroke-width="0.8"/><path d="M1 3.5 C3 2 5 4 7.5 3 M0.5 7 C3 6 5 9 8 7" stroke="#b8d0b0" stroke-width="1.2" fill="none"/></svg>
<svg style="left:853px;top:200px;" width="11" height="12" viewBox="0 0 11 12"><circle cx="2.5" cy="3.4" r="2.3" fill="#e8953a" stroke="#7a4a10" stroke-width="0.7"/><circle cx="7" cy="3" r="2.4" fill="#e8953a" stroke="#7a4a10" stroke-width="0.7"/><rect x="0" y="5.5" width="8" height="5" rx="1" fill="#e8953a" stroke="#7a4a10" stroke-width="0.7"/><path d="M8 7 L10.5 5.8 V10 L8 9 Z" fill="#e8953a" stroke="#7a4a10" stroke-width="0.6"/></svg>
<div style="left:850.5px;top:213.8px;width:13px;height:13px;border-radius:7px;background:radial-gradient(#86f080 55%,rgba(134,240,128,0) 78%)"></div>
<svg style="left:853px;top:215px;" width="10" height="11" viewBox="0 0 10 11"><path d="M-0.8 1.4 H8.2 L3.7 9.4 Z" fill="#f4f0c8" stroke="#d07a2a" stroke-width="1.3"/></svg>
<svg style="left:853px;top:229.5px;" width="10" height="13" viewBox="0 0 10 13"><circle cx="4" cy="4.4" r="3.6" fill="#f2b26a" stroke="#8a5a2a" stroke-width="0.8"/><rect x="2.2" y="7.6" width="3.6" height="4" fill="#d8d8d8" stroke="#666" stroke-width="0.7"/><circle cx="3" cy="3.4" r="1.2" fill="#fff" opacity="0.8"/></svg>
</div></div>
<div style="left:924.5px;top:171px;width:1px;height:9px;background:#ccc;"></div>
<svg style="left:931px;top:169.5px;" width="13" height="13" viewBox="0 0 13 13"><rect x="1" y="1" width="8" height="8.5" rx="1" fill="#e8e8e8" stroke="#444" stroke-width="0.8"/><rect x="3" y="2.8" width="8" height="8.5" rx="1" fill="#dfe6f6" stroke="#444" stroke-width="0.8"/><circle cx="6.5" cy="6" r="1.6" fill="#5a7ac0"/></svg>
<div style="left:903px;top:201px;width:1px;height:9px;background:#ccc;"></div>
<svg style="left:910px;top:198.5px;" width="15" height="14" viewBox="0 0 15 14"><circle cx="4.5" cy="5" r="3" fill="#c8c8c8" stroke="#888" stroke-width="0.7"/><circle cx="9.5" cy="4.5" r="3" fill="#c8c8c8" stroke="#888" stroke-width="0.7"/><rect x="2" y="7" width="9" height="5" rx="1" fill="#c8c8c8" stroke="#888" stroke-width="0.7"/><path d="M11 9 L13.5 7.8 V12 L11 11 Z" fill="#c8c8c8" stroke="#888" stroke-width="0.6"/></svg>
<div style="left:892px;top:215.5px;width:1px;height:9px;background:#ccc;"></div>
<svg style="left:900px;top:213.5px;" width="13" height="13" viewBox="0 0 13 13"><path d="M2 2.2 H11 L6.5 11 Z" fill="none" stroke="#999" stroke-width="0.9"/><circle cx="2" cy="2.2" r="1.4" fill="#e8e8e8" stroke="#888" stroke-width="0.6"/><circle cx="11" cy="2.2" r="1.4" fill="#e8e8e8" stroke="#888" stroke-width="0.6"/><circle cx="6.5" cy="11" r="1.4" fill="#e8e8e8" stroke="#888" stroke-width="0.6"/></svg>
<div style="left:894.5px;top:231px;width:1px;height:9px;background:#ccc;"></div>
<svg style="left:902px;top:229px;" width="14" height="14" viewBox="0 0 14 14"><circle cx="7" cy="7" r="2.4" fill="#f4f0c0" stroke="#b8b070" stroke-width="0.7"/><path d="M2 2 L4.5 4.5 M12 2 L9.5 4.5 M2 12 L4.5 9.5 M12 12 L9.5 9.5" stroke="#c8c080" stroke-width="0.8"/><rect x="0.8" y="0.8" width="2.2" height="2.2" fill="#f4f0c0" stroke="#b8b070" stroke-width="0.5"/><rect x="11" y="0.8" width="2.2" height="2.2" fill="#f4f0c0" stroke="#b8b070" stroke-width="0.5"/><rect x="0.8" y="11" width="2.2" height="2.2" fill="#f4f0c0" stroke="#b8b070" stroke-width="0.5"/><rect x="11" y="11" width="2.2" height="2.2" fill="#f4f0c0" stroke="#b8b070" stroke-width="0.5"/></svg>
<svg style="left:977.5px;top:201.2px;" width="11" height="9" viewBox="0 0 11 9"><path d="M0.6 4.5 C3 0.8 8 0.8 10.4 4.5 C8 8.2 3 8.2 0.6 4.5 Z" fill="#fff" stroke="#444" stroke-width="0.8"/><circle cx="5.5" cy="4.5" r="2" fill="#444"/></svg>
<svg style="left:995px;top:199.7px;" width="9" height="12" viewBox="0 0 9 12"><path d="M1.5 1 L1.5 9 L3.6 7.2 L5 10.8 L6.3 10.2 L4.9 6.8 L7.6 6.6 Z" fill="#fff" stroke="#222" stroke-width="0.8"/></svg>
<svg style="left:1008px;top:200.2px;" width="11" height="11" viewBox="0 0 11 11"><rect x="0.8" y="2.5" width="9.4" height="7.5" rx="1" fill="#3a3a3a" stroke="#111" stroke-width="0.6"/><rect x="2" y="1" width="3" height="2" fill="#3a3a3a"/><circle cx="5.5" cy="6.2" r="2.5" fill="#ddd" stroke="#111" stroke-width="0.6"/><circle cx="5.5" cy="6.2" r="1.1" fill="#555"/></svg>
<svg style="left:977.5px;top:215.8px;" width="11" height="9" viewBox="0 0 11 9"><path d="M0.6 4.5 C3 0.8 8 0.8 10.4 4.5 C8 8.2 3 8.2 0.6 4.5 Z" fill="#fff" stroke="#444" stroke-width="0.8"/><circle cx="5.5" cy="4.5" r="2" fill="#444"/></svg>
<svg style="left:995px;top:214.3px;" width="9" height="12" viewBox="0 0 9 12"><path d="M1.5 1 L1.5 9 L3.6 7.2 L5 10.8 L6.3 10.2 L4.9 6.8 L7.6 6.6 Z" fill="#fff" stroke="#222" stroke-width="0.8"/></svg>
<svg style="left:1008px;top:214.8px;" width="11" height="11" viewBox="0 0 11 11"><rect x="0.8" y="2.5" width="9.4" height="7.5" rx="1" fill="#3a3a3a" stroke="#111" stroke-width="0.6"/><rect x="2" y="1" width="3" height="2" fill="#3a3a3a"/><circle cx="5.5" cy="6.2" r="2.5" fill="#ddd" stroke="#111" stroke-width="0.6"/><circle cx="5.5" cy="6.2" r="1.1" fill="#555"/></svg>
<svg style="left:977.5px;top:231.2px;" width="11" height="9" viewBox="0 0 11 9"><path d="M0.6 4.5 C3 0.8 8 0.8 10.4 4.5 C8 8.2 3 8.2 0.6 4.5 Z" fill="#fff" stroke="#444" stroke-width="0.8"/><circle cx="5.5" cy="4.5" r="2" fill="#444"/></svg>
<svg style="left:995px;top:229.7px;" width="9" height="12" viewBox="0 0 9 12"><path d="M1.5 1 L1.5 9 L3.6 7.2 L5 10.8 L6.3 10.2 L4.9 6.8 L7.6 6.6 Z" fill="#fff" stroke="#222" stroke-width="0.8"/></svg>
<svg style="left:1008px;top:230.2px;" width="11" height="11" viewBox="0 0 11 11"><rect x="0.8" y="2.5" width="9.4" height="7.5" rx="1" fill="#3a3a3a" stroke="#111" stroke-width="0.6"/><rect x="2" y="1" width="3" height="2" fill="#3a3a3a"/><circle cx="5.5" cy="6.2" r="2.5" fill="#ddd" stroke="#111" stroke-width="0.6"/><circle cx="5.5" cy="6.2" r="1.1" fill="#555"/></svg>
<div style="left:856px;top:300px;width:160px;height:8px;border:1px solid #c4c4c4;border-radius:5px;background:#fbfbfb"></div>
<div style="left:880px;top:300px;width:119.5px;height:8px;border:1px solid #aaa;border-radius:5px;background:#fdfdfd"></div>
<svg style="left:854px;top:302px;" width="10" height="10" viewBox="0 0 10 10"><path d="M0 2 L8 10 M0 5 L5 10 M0 -1 L11 10" stroke="#8a8a8a" stroke-width="0.7" fill="none"/></svg>
<svg style="left:1011px;top:313px;" width="10" height="10" viewBox="0 0 10 10"><path d="M2 0 L10 8 M5 0 L10 5 M-1 0 L10 11" stroke="#8a8a8a" stroke-width="0.7" fill="none"/></svg>
<div class="b" style="left:860px;top:316.5px;width:24px;height:14.5px;"></div>
<svg style="left:862.5px;top:318px;" width="12" height="12" viewBox="0 0 12 12"><rect x="0.8" y="1" width="10.4" height="4" rx="1.8" fill="#555" stroke="#222" stroke-width="0.6"/><rect x="0.8" y="6.8" width="10.4" height="4" rx="1.8" fill="#555" stroke="#222" stroke-width="0.6"/><rect x="6" y="1.8" width="4.4" height="2.4" rx="1" fill="#eee"/><rect x="1.6" y="7.6" width="4.4" height="2.4" rx="1" fill="#eee"/></svg>
<svg style="left:876px;top:318.5px" width="6" height="11" viewBox="0 0 6 11"><path d="M3 0.3 L5.6 4.3 L0.4 4.3 Z M3 10.7 L5.6 6.7 L0.4 6.7 Z" fill="#7a6fe8"/></svg>
<div style="left:890px;top:316.5px;width:14.5px;height:15px;background:#4a78c8;border-radius:3px 0 0 3px"></div>
<div style="left:904.9px;top:318px;width:0.7px;height:12px;background:#dcdcdc;"></div>
<div style="left:919.8px;top:318px;width:0.7px;height:12px;background:#dcdcdc;"></div>
<div style="left:934.7px;top:318px;width:0.7px;height:12px;background:#dcdcdc;"></div>
<div style="left:949.6px;top:318px;width:0.7px;height:12px;background:#dcdcdc;"></div>
<div style="left:964.5px;top:318px;width:0.7px;height:12px;background:#dcdcdc;"></div>
<div style="left:979.4px;top:318px;width:0.7px;height:12px;background:#dcdcdc;"></div>
<div style="left:994.3px;top:318px;width:0.7px;height:12px;background:#dcdcdc;"></div>
<div style="left:1009.2px;top:318px;width:0.7px;height:12px;background:#dcdcdc;"></div>
<svg style="left:891.5px;top:318px;" width="12" height="12" viewBox="0 0 12 12"><rect x="0.8" y="2.8" width="10.4" height="8" rx="1" fill="#4a4a4a" stroke="#111" stroke-width="0.7"/><rect x="2" y="1.2" width="3.4" height="2" fill="#333"/><rect x="1.4" y="3.4" width="9.2" height="1.6" fill="#888"/><circle cx="6" cy="7" r="2.9" fill="#bbb" stroke="#111" stroke-width="0.7"/><circle cx="6" cy="7" r="1.4" fill="#555"/></svg>
<svg style="left:904.5px;top:318px;" width="12" height="12" viewBox="0 0 12 12"><rect x="1" y="1" width="7.5" height="8" rx="1" fill="#e8e8e8" stroke="#666" stroke-width="0.7"/><rect x="3" y="2.8" width="7.5" height="8" rx="1" fill="#dfe6f6" stroke="#666" stroke-width="0.7"/><circle cx="6.5" cy="6" r="1.5" fill="#6a8ad0"/></svg>
<svg style="left:920.5px;top:318px;" width="12" height="12" viewBox="0 0 12 12"><circle cx="2.5" cy="3" r="1.5" fill="#f4e27a" stroke="#a89020" stroke-width="0.5"/><rect x="5.5" y="1.5" width="5" height="6" rx="1.5" fill="#a8b8dc" stroke="#5c6fa0" stroke-width="0.7"/><circle cx="4.5" cy="8.3" r="2.6" fill="#e8e8e8" stroke="#777" stroke-width="0.7"/></svg>
<svg style="left:935px;top:318px;" width="12" height="12" viewBox="0 0 12 12"><circle cx="6" cy="6" r="4.8" fill="#a8bcd0" stroke="#5a6a7a" stroke-width="0.8"/><path d="M2.5 4 C4.5 2.5 6.5 4.5 9 3.5 M2 8 C4.5 7 6.5 10 10 8" stroke="#d8e8d0" stroke-width="1.2" fill="none"/></svg>
<svg style="left:949.7px;top:318px;" width="12" height="12" viewBox="0 0 12 12"><path d="M6 1 L11 3.2 V8.8 L6 11 L1 8.8 V3.2 Z" fill="#f0c896" stroke="#b88a50" stroke-width="0.7"/><path d="M1 3.2 L6 5.4 L11 3.2 M6 5.4 V11" stroke="#b88a50" stroke-width="0.7" fill="none"/><path d="M6 1 L11 3.2 L6 5.4 L1 3.2 Z" fill="#fae4c0"/></svg>
<svg style="left:964.7px;top:318px;" width="12" height="12" viewBox="0 0 12 12"><ellipse cx="4" cy="7.5" rx="3" ry="2.2" transform="rotate(-35 4 7.5)" fill="none" stroke="#999" stroke-width="1.3"/><ellipse cx="8" cy="4.5" rx="3" ry="2.2" transform="rotate(-35 8 4.5)" fill="none" stroke="#999" stroke-width="1.3"/></svg>
<svg style="left:979.8px;top:318px;" width="12" height="12" viewBox="0 0 12 12"><path d="M2 10.5 L7.5 5" stroke="#8aa0c8" stroke-width="2.2"/><path d="M6.5 2.5 A3 3 0 1 0 10 6 L8.2 6.2 L7 4.8 L7.5 3 Z" fill="#8aa0c8" stroke="#5a70a0" stroke-width="0.5"/></svg>
<svg style="left:994.5px;top:318px;" width="12" height="12" viewBox="0 0 12 12"><path d="M1.8 2.2 H10.2 L6 10.5 Z" fill="none" stroke="#888" stroke-width="0.9"/><circle cx="1.8" cy="2.2" r="1.4" fill="#e8e8e8" stroke="#888" stroke-width="0.6"/><circle cx="10.2" cy="2.2" r="1.4" fill="#e8e8e8" stroke="#888" stroke-width="0.6"/><circle cx="6" cy="10.5" r="1.4" fill="#e8e8e8" stroke="#888" stroke-width="0.6"/></svg>
<div style="left:1009.5px;top:318px;width:12px;height:12px;border-radius:6px;background:radial-gradient(circle at 40% 40%,#f8ece8,#dcc0b8 60%,#b89890);border:0.5px solid #a98"></div>
<svg style="left:861px;top:341px;" width="12" height="12" viewBox="0 0 12 12"><path d="M6.5 1 L11 5.5 L9.8 6 L8 5.6 L6 7.6 L6.2 9.6 L5.2 10 L2 6.8 L2.4 5.8 L4.4 6 L6.4 4 L6 2.2 Z" fill="#e4e4e4" stroke="#444" stroke-width="0.8"/><path d="M3.6 8.4 L1 11" stroke="#444" stroke-width="0.9"/></svg>
<svg style="left:876px;top:341px;" width="12" height="12" viewBox="0 0 12 12"><circle cx="2.5" cy="3" r="1.6" fill="#f4e27a" stroke="#a89020" stroke-width="0.6"/><rect x="5.5" y="1.5" width="5" height="6" rx="1.5" fill="#7d95c9" stroke="#3c4f80" stroke-width="0.7"/><circle cx="4.5" cy="8.3" r="2.6" fill="#e8e8e8" stroke="#555" stroke-width="0.7"/></svg>
<div class="t" style="left:891.8px;top:341.20px;line-height:12px;font-size:8.4px;color:#1a1a1a;">Scene</div>
<div style="left:857px;top:359px;width:148px;height:1px;background:#8a8a8a;"></div>
<svg style="left:862px;top:365.5px;" width="7" height="7" viewBox="0 0 7 7"><path d="M0.3 0.8 H6.7 L3.5 6.4 Z" fill="#333"/></svg>
<div class="t" style="left:871.6px;top:363.00px;line-height:12px;font-size:9.4px;color:#1a1a1a;">Render</div>
<div style="left:992.0px;top:368.4px;width:1px;height:1px;background:#999;"></div>
<div style="left:992.0px;top:370.59999999999997px;width:1px;height:1px;background:#999;"></div>
<div style="left:994.2px;top:368.4px;width:1px;height:1px;background:#999;"></div>
<div style="left:994.2px;top:370.59999999999997px;width:1px;height:1px;background:#999;"></div>
<div style="left:996.4px;top:368.4px;width:1px;height:1px;background:#999;"></div>
<div style="left:996.4px;top:370.59999999999997px;width:1px;height:1px;background:#999;"></div>
<div style="left:998.6px;top:368.4px;width:1px;height:1px;background:#999;"></div>
<div style="left:998.6px;top:370.59999999999997px;width:1px;height:1px;background:#999;"></div>
<div style="left:859px;top:383.6px;width:142px;height:13.6px;border:1px solid #d4e6e6;border-radius:3px;background:#fcfdfd"></div>
<div style="left:906.5px;top:384.5px;width:1px;height:13.6px;background:#d4e6e6;"></div>
<div style="left:954.5px;top:384.5px;width:1px;height:13.6px;background:#d4e6e6;"></div>
<svg style="left:861px;top:385.5px;" width="12" height="12" viewBox="0 0 12 12"><rect x="0.8" y="2.8" width="10.4" height="8" rx="1" fill="#4a4a4a" stroke="#111" stroke-width="0.7"/><rect x="2" y="1.2" width="3.4" height="2" fill="#333"/><rect x="1.4" y="3.4" width="9.2" height="1.6" fill="#888"/><circle cx="6" cy="7" r="2.9" fill="#bbb" stroke="#111" stroke-width="0.7"/><circle cx="6" cy="7" r="1.4" fill="#555"/><circle cx="10.5" cy="1.8" r="1.2" fill="#f4e060"/></svg>
<div class="t" style="left:875.3px;top:385.30px;line-height:12px;font-size:8.4px;color:#1a1a1a;">Render</div>
<svg style="left:908px;top:385.5px;" width="13" height="12" viewBox="0 0 13 12"><rect x="1" y="4.5" width="11" height="6.5" fill="#2a2a2a"/><path d="M1 4.5 L11.5 1 L12 3 L1.5 6.2 Z" fill="#2a2a2a"/><path d="M3 7 H12 M3 9 H12" stroke="#ddd" stroke-width="0.8"/><path d="M3.5 3.2 L5 4.6 M6.5 2.4 L8 3.8 M9.5 1.5 L11 2.9" stroke="#ddd" stroke-width="0.9"/></svg>
<div class="t" style="left:919.6px;top:385.30px;line-height:12px;font-size:8.4px;color:#1a1a1a;letter-spacing:0.126px;--k:1;">Animatio</div>
<svg style="left:956.5px;top:385.5px;" width="14" height="12" viewBox="0 0 14 12"><path d="M1 4 H3 L5.5 1.8 V10.2 L3 8 H1 Z" fill="#e8e8e8" stroke="#444" stroke-width="0.7"/><path d="M7.2 3.2 C8.5 4.8 8.5 7.2 7.2 8.8" stroke="#5a7ac0" stroke-width="1" fill="none"/><path d="M9 1.8 C11.2 4.2 11.2 7.8 9 10.2" stroke="#8aa4dc" stroke-width="1" fill="none"/></svg>
<div class="t" style="left:973.5px;top:385.30px;line-height:12px;font-size:8.4px;color:#1a1a1a;">Audio</div>
<div class="t" style="left:864.2px;top:404.80px;line-height:12px;font-size:8.4px;color:#1a1a1a;">Display:</div>
<div class="b" style="left:909.5px;top:402.7px;width:92px;height:14.2px;"></div>
<div style="left:987px;top:403.7px;width:1px;height:12.4px;background:#d5d5d5;"></div>
<div class="t" style="left:915.5px;top:404.60px;line-height:12px;font-size:8.4px;color:#1a1a1a;">Image Editor</div>
<svg style="left:979px;top:404.5px" width="6" height="11" viewBox="0 0 6 11"><path d="M3 0.3 L5.6 4.3 L0.4 4.3 Z M3 10.7 L5.6 6.7 L0.4 6.7 Z" fill="#7a6fe8"/></svg>
<svg style="left:989px;top:404px;" width="11" height="12" viewBox="0 0 11 12"><rect x="1.5" y="5" width="8.5" height="5.8" fill="#f4f4f4" stroke="#444" stroke-width="0.9"/><path d="M2.2 5 V3 C2.2 0.8 6 0.8 6 3 V3.6" stroke="#444" stroke-width="0.9" fill="none"/><rect x="5.2" y="7" width="2.6" height="2" fill="#444"/></svg>
<div style="left:857px;top:422.2px;width:148px;height:1px;background:#c4c4c4;"></div>
<svg style="left:862px;top:428.5px;" width="7" height="7" viewBox="0 0 7 7"><path d="M0.3 0.8 H6.7 L3.5 6.4 Z" fill="#333"/></svg>
<div class="t" style="left:871.6px;top:426.00px;line-height:12px;font-size:9.4px;color:#1a1a1a;">Dimensions</div>
<div style="left:992.0px;top:431.4px;width:1px;height:1px;background:#999;"></div>
<div style="left:992.0px;top:433.59999999999997px;width:1px;height:1px;background:#999;"></div>
<div style="left:994.2px;top:431.4px;width:1px;height:1px;background:#999;"></div>
<div style="left:994.2px;top:433.59999999999997px;width:1px;height:1px;background:#999;"></div>
<div style="left:996.4px;top:431.4px;width:1px;height:1px;background:#999;"></div>
<div style="left:996.4px;top:433.59999999999997px;width:1px;height:1px;background:#999;"></div>
<div style="left:998.6px;top:431.4px;width:1px;height:1px;background:#999;"></div>
<div style="left:998.6px;top:433.59999999999997px;width:1px;height:1px;background:#999;"></div>
<div class="b" style="left:859.5px;top:447.8px;width:142.5px;height:14px;"></div>
<div style="left:972.5px;top:449.5px;width:1px;height:12px;background:#d5d5d5;"></div>
<div style="left:987px;top:449.5px;width:1px;height:12px;background:#d5d5d5;"></div>
<div class="t" style="left:864.8px;top:449.60px;line-height:12px;font-size:8.4px;color:#1a1a1a;letter-spacing:-0.235px;--k:1;">Render Presets</div>
<svg style="left:964.5px;top:450.0px" width="6" height="11" viewBox="0 0 6 11"><path d="M3 0.3 L5.6 4.3 L0.4 4.3 Z M3 10.7 L5.6 6.7 L0.4 6.7 Z" fill="#7a6fe8"/></svg>
<svg style="left:974.5px;top:450px;" width="11" height="11" viewBox="0 0 11 11"><path d="M4.2 1.5 H6.8 V4.2 H9.5 V6.8 H6.8 V9.5 H4.2 V6.8 H1.5 V4.2 H4.2 Z" stroke="#666" stroke-width="0.9" fill="#f4f4f4"/></svg>
<svg style="left:989px;top:450px;" width="11" height="11" viewBox="0 0 11 11"><rect x="1.5" y="4.2" width="8" height="2.6" stroke="#666" stroke-width="0.9" fill="#f4f4f4"/></svg>
<div class="t" style="left:864.5px;top:468.20px;line-height:12px;font-size:8.4px;color:#1a1a1a;letter-spacing:-0.137px;--k:1;">Resolution:</div>
<div class="t" style="left:939.5px;top:468.20px;line-height:12px;font-size:8.4px;color:#1a1a1a;letter-spacing:-0.178px;--k:1;">Frame Range:</div>
<svg style="left:862.8px;top:486.1px;" width="4" height="5.4" viewBox="0 0 4 5.4"><path d="M3.8 0.2 L3.8 5.2 L0.3 2.7 Z" fill="#7a6fe8"/></svg>
<div class="t" style="left:870.5px;top:482.80px;line-height:12px;font-size:8.4px;color:#1a1a1a;">X:</div>
<div class="t" style="left:870px;top:482.8px;width:45px;letter-spacing:0.3px;text-align:right;line-height:12px;font-size:8.4px;color:#1a1a1a">1920 px</div>
<svg style="left:919.5px;top:486.1px;" width="4" height="5.4" viewBox="0 0 4 5.4"><path d="M0.3 0.2 L0.3 5.2 L3.8 2.7 Z" fill="#7a6fe8"/></svg>
<svg style="left:937.8px;top:486.1px;" width="4" height="5.4" viewBox="0 0 4 5.4"><path d="M3.8 0.2 L3.8 5.2 L0.3 2.7 Z" fill="#7a6fe8"/></svg>
<div class="t" style="left:945.7px;top:482.80px;line-height:12px;font-size:8.4px;color:#1a1a1a;letter-spacing:-0.071px;--k:1;">Start Fra:</div>
<div class="t" style="left:940px;top:482.8px;width:50px;text-align:right;line-height:12px;font-size:8.4px;color:#1a1a1a">1</div>
<svg style="left:994px;top:486.1px;" width="4" height="5.4" viewBox="0 0 4 5.4"><path d="M0.3 0.2 L0.3 5.2 L3.8 2.7 Z" fill="#7a6fe8"/></svg>
<svg style="left:862.8px;top:500.5px;" width="4" height="5.4" viewBox="0 0 4 5.4"><path d="M3.8 0.2 L3.8 5.2 L0.3 2.7 Z" fill="#7a6fe8"/></svg>
<div class="t" style="left:870.5px;top:497.20px;line-height:12px;font-size:8.4px;color:#1a1a1a;">Y:</div>
<div class="t" style="left:870px;top:497.2px;width:45px;letter-spacing:0.3px;text-align:right;line-height:12px;font-size:8.4px;color:#1a1a1a">1080 px</div>
<svg style="left:919.5px;top:500.5px;" width="4" height="5.4" viewBox="0 0 4 5.4"><path d="M0.3 0.2 L0.3 5.2 L3.8 2.7 Z" fill="#7a6fe8"/></svg>
<svg style="left:937.8px;top:500.5px;" width="4" height="5.4" viewBox="0 0 4 5.4"><path d="M3.8 0.2 L3.8 5.2 L0.3 2.7 Z" fill="#7a6fe8"/></svg>
<div class="t" style="left:945.7px;top:497.20px;line-height:12px;font-size:8.4px;color:#1a1a1a;letter-spacing:-0.338px;--k:1;">End Fr:</div>
<div class="t" style="left:940px;top:497.2px;width:50px;text-align:right;line-height:12px;font-size:8.4px;color:#1a1a1a">250</div>
<svg style="left:994px;top:500.5px;" width="4" height="5.4" viewBox="0 0 4 5.4"><path d="M0.3 0.2 L0.3 5.2 L3.8 2.7 Z" fill="#7a6fe8"/></svg>
<div style="left:859.6px;top:510.8px;width:36px;height:13.7px;background:#2ebd6b;border-radius:0 0 0 6px"></div>
<div class="t" style="left:897.8px;top:512.20px;line-height:12px;font-size:8.4px;color:#1a1a1a;">50%</div>
<svg style="left:937.8px;top:515.0999999999999px;" width="4" height="5.4" viewBox="0 0 4 5.4"><path d="M3.8 0.2 L3.8 5.2 L0.3 2.7 Z" fill="#7a6fe8"/></svg>
<div class="t" style="left:945.7px;top:511.80px;line-height:12px;font-size:8.4px;color:#1a1a1a;letter-spacing:-0.118px;--k:1;">Frame St:</div>
<div class="t" style="left:940px;top:511.8px;width:50px;text-align:right;line-height:12px;font-size:8.4px;color:#1a1a1a">1</div>
<svg style="left:994px;top:515.0999999999999px;" width="4" height="5.4" viewBox="0 0 4 5.4"><path d="M0.3 0.2 L0.3 5.2 L3.8 2.7 Z" fill="#7a6fe8"/></svg>
<div class="t" style="left:864.2px;top:527.80px;line-height:12px;font-size:8.4px;color:#1a1a1a;letter-spacing:-0.070px;--k:1;">Aspect Ratio:</div>
<div class="t" style="left:939.5px;top:527.80px;line-height:12px;font-size:8.4px;color:#1a1a1a;letter-spacing:-0.095px;--k:1;">Frame Rate:</div>
<div style="left:934px;top:540.4px;width:67px;height:6px;border:1px solid #c4c4c4;border-radius:3px 3px 0 0"></div>
<div style="left:1008.5px;top:337px;width:8.5px;height:201px;border:1px solid #c4c4c4;border-radius:5px;background:#fdfdfd"></div>
<div style="left:1008.5px;top:337px;width:8.5px;height:72.5px;border:1px solid #aaa;border-radius:5px;background:#fefefe"></div>
<svg style="left:854px;top:534px;" width="10" height="10" viewBox="0 0 10 10"><path d="M0 2 L8 10 M0 5 L5 10 M0 -1 L11 10" stroke="#8a8a8a" stroke-width="0.7" fill="none"/></svg>
<div style="left:0px;top:543px;width:1024px;height:2px;background:#4a4a4a;"></div>
<svg style="left:366px;top:37px;" width="486" height="419" viewBox="0 0 486 419"><path d="M313.0 109.0 L301.5 239.0" stroke="#2a6a5a" stroke-width="0.7" opacity="0.5" fill="none"/><path d="M89.7 167.4 L131.6 171.3 L127.1 201.5 L88.0 195.0 Z M55.0 176.2 L89.7 167.4 M55.0 176.2 L131.6 171.3 M55.0 176.2 L127.1 201.5 M55.0 176.2 L88.0 195.0" stroke="#10302a" stroke-width="1" fill="none"/><path d="M113.6 148.1 L96.9 165.6 L125.8 168.3 Z" fill="#000"/><path d="M218.6 189.9 L249.5 184.3 L268.0 197.1 L233.5 202.4 Z" fill="#9a98a4"/><path d="M218.6 189.9 L233.5 202.4 L234.6 236.4 L220.3 221.5 Z" fill="#85838e"/><path d="M233.5 202.4 L268.0 197.1 L268.0 228.0 L234.6 236.4 Z" fill="#65656d"/><path d="M218.6 189.9 L249.5 184.3 L268.0 197.1 L268.0 228.0 L234.6 236.4 L220.3 221.5 Z" fill="none" stroke="#4cc860" stroke-width="1.3" stroke-linejoin="round"/><path d="M243.2 198.3 L242.1 161.0" stroke="#fff" stroke-width="1"/><path d="M242.1 148.4 L238.6 161.3 L245.6 161.3 Z" fill="#fff"/><path d="M252.2 217.3 L265.0 231.0" stroke="#fff" stroke-width="0.9" opacity="0.9"/><path d="M262.9 233.6 L269.6 229.7 L273.9 239.3 Z" fill="#fff"/><path d="M254.2 206.8 L284.0 200.0" stroke="#fff" stroke-width="0.8" opacity="0.55"/><path d="M283.7 197.0 L283.7 202.7 L293.7 198.9 Z" fill="#fff"/><path d="M253.0 214.5 L265.0 214.0" stroke="#fff" stroke-width="0.9" stroke-dasharray="1.5 1.5" opacity="0.8"/><circle cx="243.20000000000005" cy="209.3" r="10.8" fill="none" stroke="#e8e8ee" stroke-width="0.9"/><circle cx="243.20000000000005" cy="209.3" r="7.3" fill="none" stroke="#e8e8ee" stroke-width="1.3"/><circle cx="243.20000000000005" cy="209.3" r="7.3" fill="none" stroke="#a0303a" stroke-width="1.3" stroke-dasharray="2.9 2.85"/><path d="M243.2 194.2 L243.2 205.3 M243.2 213.3 L243.2 224.4 M228.0 209.3 L239.2 209.3 M247.2 209.3 L258.0 209.3" stroke="#111" stroke-width="1.1"/><circle cx="243.20000000000005" cy="209.3" r="2.6" fill="#3ad03a" stroke="#dff" stroke-width="0.7"/><circle cx="314.1" cy="100.4" r="2.4" fill="#000"/><circle cx="314.1" cy="100.4" r="6.9" fill="none" stroke="#06200f" stroke-width="1.1" stroke-dasharray="2.2 1.6"/><circle cx="314.1" cy="100.4" r="9.1" fill="none" stroke="#06200f" stroke-width="1.1" stroke-dasharray="2.4 1.7" stroke-dashoffset="1.5"/><path d="M19.8 398.0 L19.8 383.3 M19.8 398.0 L37.4 394.2 M19.8 398.0 L26.3 403.8" stroke="#eeeeff" stroke-width="1.3" opacity="0.95" fill="none"/></svg>
<div class="t" style="left:381.8px;top:44.00px;line-height:12px;font-size:8.4px;color:rgba(255,255,255,0.68);letter-spacing:-0.259px;--k:1;">User Persp</div>
<div class="t" style="left:418.7px;top:438.90px;line-height:12px;font-size:8.4px;color:rgba(255,255,255,0.8);">(1) Cube</div>
<div class="t" style="left:387.5px;top:409.00px;line-height:12px;font-size:7.8px;color:rgba(240,240,255,0.92);">z</div>
<div class="t" style="left:404.5px;top:422.50px;line-height:12px;font-size:7.8px;color:rgba(240,240,255,0.92);">y</div>
<div class="t" style="left:394px;top:433.50px;line-height:12px;font-size:7.8px;color:rgba(240,240,255,0.92);">x</div>
<div style="left:842.5px;top:54px;width:9.5px;height:10px;background:rgba(90,140,100,0.6);border-radius:3px 0 0 3px"></div>
<div class="t" style="left:845px;top:52.80px;line-height:12px;font-size:8px;color:rgba(255,255,255,0.35);">+</div>
<svg style="left:842px;top:37px;" width="10" height="10" viewBox="0 0 10 10"><path d="M2 0 L10 8 M5 0 L10 5 M-1 0 L10 11" stroke="#8a8a8a" stroke-width="0.7" fill="none"/></svg>
<svg style="left:853px;top:37px;" width="167.5" height="94.3" viewBox="0 0 167.5 94.3"><path d="M-104.8 51.1 L83.2 7.0 M-104.8 51.1 L-37.0 942.0 M-104.3 56.9 L89.3 8.6 M-84.1 46.3 L83.5 593.4 M-103.8 63.4 L95.9 10.3 M-65.4 41.9 L141.1 426.8 M-103.3 70.7 L102.9 12.2 M-48.5 37.9 L174.8 329.1 M-102.6 79.2 L110.3 14.2 M-33.0 34.3 L197.0 265.0 M-101.9 88.9 L118.3 16.3 M-18.9 31.0 L212.7 219.6 M-101.0 100.3 L126.9 18.6 M-5.9 27.9 L224.4 185.8 M-100.0 113.9 L136.2 21.0 M6.2 25.1 L233.4 159.7 M-98.7 130.2 L146.2 23.7 M17.3 22.5 L240.6 138.9 M-97.2 150.3 L157.0 26.6 M27.6 20.0 L246.4 121.9 M-95.3 175.5 L168.8 29.7 M37.2 17.8 L251.3 107.8 M-92.8 208.3 L181.7 33.2 M46.1 15.7 L255.4 95.9 M-89.4 252.6 L195.8 36.9 M54.5 13.7 L259.0 85.7 M-84.6 315.5 L211.4 41.0 M62.4 11.9 L262.0 76.9 M-77.3 412.2 L228.6 45.6 M69.7 10.1 L264.7 69.2 M-64.5 580.0 L247.7 50.7 M76.7 8.5 L267.0 62.4 M-37.0 942.0 L269.1 56.4 M83.2 7.0 L269.1 56.4 " stroke="#fff" stroke-width="0.9" opacity="0.8" fill="none"/><path d="M160.60000000000002 0 L146 90" stroke="#2a5a4a" stroke-width="0.6" opacity="0.45"/><path d="M55.1 67.3 L75.9 81.4 M75.9 81.4 L100.0 68.1 M100.0 68.1 L78.7 56.7 M78.7 56.7 L55.1 67.3 M52.7 38.3 L75.2 49.6 M75.2 49.6 L101.3 38.8 M101.3 38.8 L78.3 29.8 M78.3 29.8 L52.7 38.3 M55.1 67.3 L52.7 38.3 M75.9 81.4 L75.2 49.6 M100.0 68.1 L101.3 38.8 M78.7 56.7 L78.3 29.8 " stroke="#3ed05a" stroke-width="1.3" fill="none" opacity="0.95"/><path d="M77.20000000000005 45.7 L76.29999999999995 5" stroke="#fff" stroke-width="1"/><rect x="73.79999999999995" y="0.5" width="5.2" height="4.6" fill="#fff"/><path d="M106.5 40.599999999999994 L115.70000000000005 37.3 L112.79999999999995 41.8 Z" fill="#fff"/><path d="M114.20000000000005 76.8 L119.20000000000005 70.5 L129.60000000000002 80.9 Z" fill="#fff"/><circle cx="77.20000000000005" cy="53.7" r="10" fill="none" stroke="#e8e8ee" stroke-width="0.8" opacity="0.9"/><circle cx="77.20000000000005" cy="53.7" r="7" fill="none" stroke="#e8e8ee" stroke-width="1.1"/><circle cx="77.20000000000005" cy="53.7" r="7" fill="none" stroke="#b0404a" stroke-width="1.1" stroke-dasharray="2.75 2.75"/><path d="M77.20000000000005 38.7 V49.7 M77.20000000000005 57.7 V68.7 M62.200000000000045 53.7 H73.20000000000005 M81.20000000000005 53.7 H92.20000000000005" stroke="#111" stroke-width="1"/><circle cx="77.20000000000005" cy="53.7" r="2.4" fill="#3ad03a"/><path d="M20.399999999999977 74.9 L18.399999999999977 59.5 M20.399999999999977 74.9 L32.89999999999998 70.1 M20.399999999999977 74.9 L31.899999999999977 80.7" stroke="#eef" stroke-width="1.4" opacity="0.95"/></svg>
<div class="t" style="left:867.6px;top:44.20px;line-height:12px;font-size:8.4px;color:rgba(255,255,255,0.7);letter-spacing:-0.233px;--k:1;">Camera Persp</div>
<div class="t" style="left:906.1px;top:116.30px;line-height:12px;font-size:8.4px;color:rgba(255,255,255,0.8);">(1) Cube</div>
<div class="t" style="left:875px;top:87.00px;line-height:12px;font-size:7.8px;color:rgba(240,240,255,0.92);">z</div>
<div class="t" style="left:888px;top:97.50px;line-height:12px;font-size:7.8px;color:rgba(240,240,255,0.92);">y</div>
<div class="t" style="left:887.5px;top:109.00px;line-height:12px;font-size:7.8px;color:rgba(240,240,255,0.92);">x</div>
<div style="left:995.5px;top:122.3px;width:9px;height:9px;background:rgba(70,70,150,0.5);border-radius:3px 3px 0 0"></div>
<div class="t" style="left:997.6px;top:120.80px;line-height:12px;font-size:8px;color:rgba(255,255,255,0.35);">+</div>
<svg style="left:854px;top:121px;" width="10" height="10" viewBox="0 0 10 10"><path d="M0 2 L8 10 M0 5 L5 10 M0 -1 L11 10" stroke="#8a8a8a" stroke-width="0.7" fill="none"/></svg>
<svg style="left:1011px;top:37px;" width="10" height="10" viewBox="0 0 10 10"><path d="M2 0 L10 8 M5 0 L10 5 M-1 0 L10 11" stroke="#8a8a8a" stroke-width="0.7" fill="none"/></svg>
<div style="left:366px;top:36px;width:655px;height:1.4px;background:#63f674;"></div>
<div style="left:366px;top:35.9px;width:655px;height:0.9px;background:#566a58;"></div>
<div style="left:1020.5px;top:17px;width:3.5px;height:528px;background:#d6d6d6;"></div>
<div style="left:1020.8px;top:0px;width:3.2px;height:48.5px;background:#f8f8f8;"></div>
<div style="left:1020.5px;top:48.5px;width:3.5px;height:42.2px;background:#3a4044;"></div>
<svg style="left:1010.5px;top:17.5px;" width="10" height="10" viewBox="0 0 10 10"><path d="M2 0 L10 8 M5 0 L10 5 M-1 0 L10 11" stroke="#8a8a8a" stroke-width="0.7" fill="none"/></svg>
<div style="left:0px;top:543px;width:1024px;height:2px;background:#1c1c1c;"></div>
</div></body></html>
